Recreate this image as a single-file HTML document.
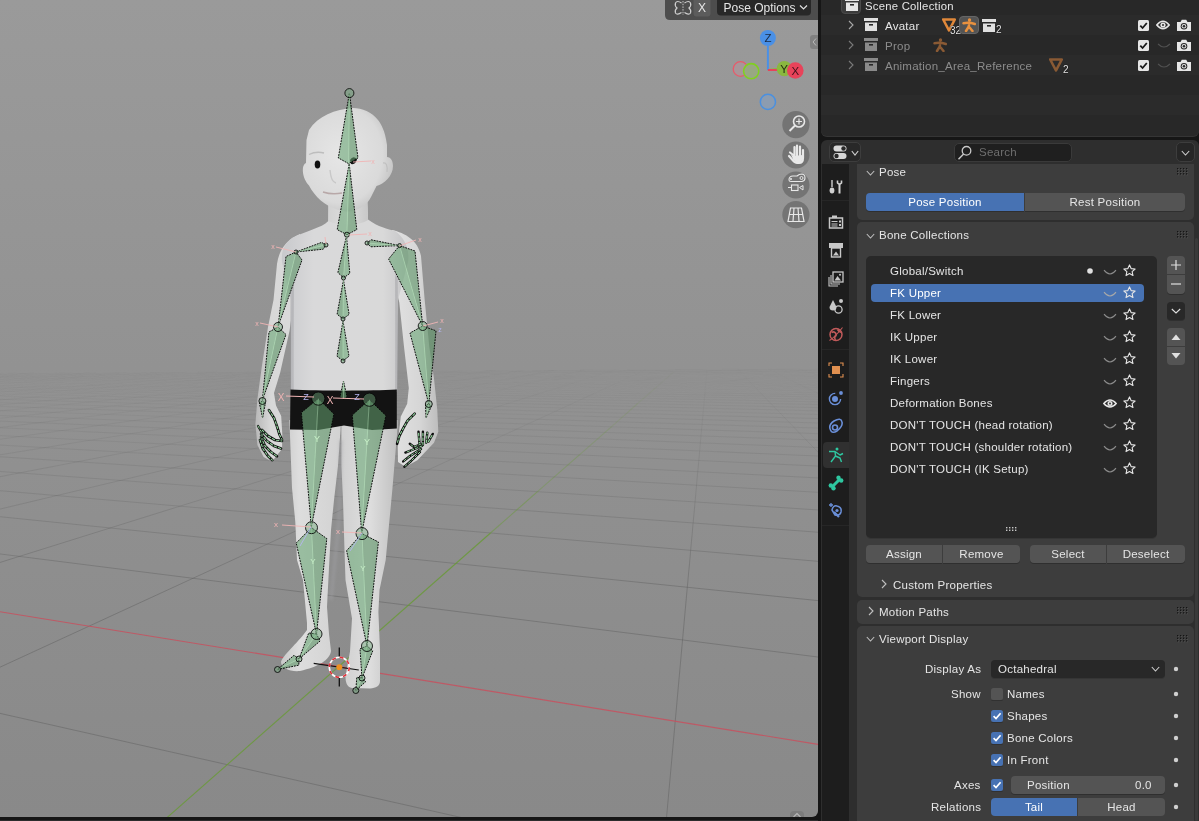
<!DOCTYPE html><html><head><meta charset="utf-8"><style>
*{margin:0;padding:0}
html,body{width:1199px;height:821px;overflow:hidden;background:#161616;font-family:"Liberation Sans",sans-serif}
.r{position:absolute}
.t{position:absolute;white-space:nowrap;line-height:1;font-family:"Liberation Sans",sans-serif;-webkit-font-smoothing:antialiased;will-change:transform}
#vp{position:absolute;left:0;top:0;width:818px;height:817px;will-change:transform;border-radius:0 0 6px 0;overflow:hidden}
</style></head><body>
<div id="vp"><svg width="818" height="817" viewBox="0 0 818 817" style="position:absolute;left:0;top:0">
<defs>
<linearGradient id="vpbg" x1="0" y1="0" x2="0" y2="1">
 <stop offset="0" stop-color="#9a9a9a"/><stop offset="0.45" stop-color="#929292"/><stop offset="1" stop-color="#898989"/>
</linearGradient>
<linearGradient id="armL" x1="0" y1="0" x2="1" y2="0"><stop offset="0" stop-color="#b8b8b8"/><stop offset="0.35" stop-color="#d8d8d8"/><stop offset="1" stop-color="#dadada"/></linearGradient>
<linearGradient id="armR" x1="0" y1="0" x2="1" y2="0"><stop offset="0" stop-color="#e2e2e2"/><stop offset="0.6" stop-color="#d6d6d6"/><stop offset="1" stop-color="#bdbdbd"/></linearGradient>
<linearGradient id="torso" x1="0" y1="0" x2="1" y2="0"><stop offset="0" stop-color="#c8c9cc"/><stop offset="0.25" stop-color="#d9d9da"/><stop offset="0.8" stop-color="#d9d9d9"/><stop offset="1" stop-color="#c4c4c6"/></linearGradient>
<linearGradient id="legL" x1="0" y1="0" x2="1" y2="0"><stop offset="0" stop-color="#c9c9c9"/><stop offset="0.3" stop-color="#dddddd"/><stop offset="1" stop-color="#d2d2d2"/></linearGradient>
<linearGradient id="legR" x1="0" y1="0" x2="1" y2="0"><stop offset="0" stop-color="#d0d0d0"/><stop offset="0.5" stop-color="#dedede"/><stop offset="1" stop-color="#c0c0c0"/></linearGradient>
<radialGradient id="head" cx="0.42" cy="0.45" r="0.62"><stop offset="0" stop-color="#e6e6e6"/><stop offset="0.75" stop-color="#dadada"/><stop offset="1" stop-color="#c2c2c2"/></radialGradient>
<filter id="blur2" x="-50%" y="-10%" width="200%" height="120%"><feGaussianBlur stdDeviation="1.5"/></filter>
<linearGradient id="neck" x1="0" y1="0" x2="1" y2="0"><stop offset="0" stop-color="#d2d2d2"/><stop offset="0.5" stop-color="#dedede"/><stop offset="1" stop-color="#c8c8c8"/></linearGradient>
</defs>
<rect x="0" y="0" width="818" height="817" fill="url(#vpbg)"/>
<path d="M-5.5 373.6L3.4 373.2M-5.1 374.9L34.1 373.0M-5.4 376.4L64.8 372.8M-5.8 378.0L95.5 372.7M-5.4 379.8L126.2 372.5M-5.8 381.8L156.3 372.4M-5.3 383.9L186.9 372.2M4.8 385.7L217.6 372.0M48.8 385.5L248.3 371.8M92.7 385.2L278.9 371.7M136.7 385.0L309.6 371.5M179.8 384.8L339.8 371.3M223.8 384.5L370.5 371.2M267.7 384.3L401.2 371.0M311.6 384.0L431.8 370.8M355.5 383.8L462.4 370.6M399.4 383.5L493.0 370.5M442.9 383.3L523.4 370.3M486.7 383.1L554.1 370.2M530.6 382.8L584.7 370.0M574.5 382.6L615.3 369.8M618.3 382.3L645.9 369.6M705.9 381.9L707.0 369.3M749.7 381.6L737.6 369.1M793.5 381.4L768.2 369.0M823.0 376.6L798.8 368.8M-6.1 385.2L18.1 385.7M-6.0 383.5L86.1 385.3M-6.0 382.0L154.1 384.9M-5.9 380.6L223.8 384.5M-5.9 379.2L291.8 384.2M-5.8 378.0L359.8 383.8M-5.8 376.9L427.7 383.4M-5.8 375.8L495.7 383.0M-5.7 374.8L563.6 382.6M-5.7 373.9L633.6 382.3M8.0 373.2L701.5 381.9M55.5 372.9L769.4 381.5M103.0 372.6L823.5 381.0M150.5 372.4L824.7 379.9M197.9 372.1L823.7 378.8M246.6 371.8L824.8 377.8M294.1 371.6L823.8 376.8M341.5 371.3L824.8 375.9M389.0 371.1L823.9 375.0M436.4 370.8L824.9 374.2M483.8 370.5L824.0 373.4M532.6 370.3L823.1 372.6M580.1 370.0L824.1 371.9M627.5 369.7L823.3 371.2M674.9 369.5L824.2 370.6M722.3 369.2L823.4 369.9M769.7 368.9L824.3 369.3M818.7 368.7L823.5 368.7" stroke="#5a5a5a" stroke-opacity="0.02" stroke-width="1" fill="none"/>
<path d="M-5.8 386.4L4.8 385.7M-5.2 389.2L48.8 385.5M-5.8 392.4L92.7 385.2M-5.1 396.0L136.7 385.0M39.8 396.6L179.8 384.8M95.5 396.2L223.8 384.5M150.0 396.0L267.7 384.3M205.6 395.7L311.6 384.0M261.3 395.4L355.5 383.8M316.8 395.0L399.4 383.5M372.4 394.7L442.9 383.3M427.9 394.4L486.7 383.1M482.9 394.2L530.6 382.8M538.5 393.9L574.5 382.6M594.0 393.5L618.3 382.3M704.9 392.9L705.9 381.9M760.3 392.6L749.7 381.6M815.9 392.3L793.5 381.4M-6.4 396.1L14.6 396.7M-6.3 393.5L100.7 396.2M-6.3 391.1L186.7 395.7M-6.2 389.0L272.7 395.3M-6.1 387.0L361.0 394.8M18.1 385.7L447.0 394.3M86.1 385.3L533.0 393.9M154.1 384.9L619.0 393.4M223.8 384.5L704.9 392.9M291.8 384.2L793.6 392.5M359.8 383.8L824.3 391.1M427.7 383.4L825.7 389.4M495.7 383.0L824.4 387.7M563.6 382.6L823.2 386.2M633.6 382.3L824.5 384.8M701.5 381.9L823.4 383.4M769.4 381.5L824.6 382.2" stroke="#5a5a5a" stroke-opacity="0.04" stroke-width="1" fill="none"/>
<path d="M-5.7 400.4L39.8 396.6M-6.5 405.5L95.5 396.2M42.3 406.7L150.0 396.0M108.7 406.4L205.6 395.7M175.1 406.0L261.3 395.4M241.4 405.6L316.8 395.0M306.7 405.3L372.4 394.7M373.0 404.9L427.9 394.4M439.3 404.6L482.9 394.2M505.6 404.2L538.5 393.9M571.8 403.8L594.0 393.5M704.0 403.1L704.9 392.9M770.2 402.8L760.3 392.6M823.1 395.9L815.9 392.3M-6.7 406.1L16.1 406.9M-6.6 402.4L118.7 406.3M-6.5 399.1L221.4 405.7M14.6 396.7L326.7 405.2M100.7 396.2L429.4 404.6M186.7 395.7L532.0 404.0M272.7 395.3L634.5 403.5M361.0 394.8L737.0 402.9M447.0 394.3L825.6 402.0M533.0 393.9L824.0 399.4M619.0 393.4L825.7 397.1M704.9 392.9L824.1 395.0M793.6 392.5L825.7 393.0" stroke="#5a5a5a" stroke-opacity="0.06" stroke-width="1" fill="none"/>
<path d="M-5.7 411.5L42.3 406.7M-6.6 419.0L108.7 406.4M69.1 419.0L175.1 406.0M148.6 418.5L241.4 405.6M228.0 418.0L306.7 405.3M306.2 417.8L373.0 404.9M385.7 417.3L439.3 404.6M465.1 416.8L505.6 404.2M544.4 416.4L571.8 403.8M702.9 415.4L704.0 403.1M782.2 415.2L770.2 402.8M-7.0 415.2L88.6 418.9M-6.9 410.3L211.6 418.2M16.1 406.9L334.5 417.5M118.7 406.3L457.4 416.8M221.4 405.7L583.9 416.2M326.7 405.2L706.8 415.5M429.4 404.6L825.5 414.7M532.0 404.0L823.6 411.0M634.5 403.5L825.6 407.8M737.0 402.9L823.8 404.7" stroke="#5a5a5a" stroke-opacity="0.08" stroke-width="1" fill="none"/>
<path d="M-5.6 428.2L69.1 419.0M53.8 431.7L148.6 418.5M146.6 431.2L228.0 418.0M239.4 430.6L306.2 417.8M332.1 430.1L385.7 417.3M424.6 429.5L465.1 416.8M516.5 429.2L544.4 416.4M701.7 428.1L702.9 415.4M794.2 427.6L782.2 415.2M-7.4 427.4L81.9 431.5M-7.2 420.8L225.4 430.7M88.6 418.9L368.9 429.9M211.6 418.2L512.3 429.1M334.5 417.5L655.5 428.3M457.4 416.8L803.5 427.6M583.9 416.2L825.4 423.2M706.8 415.5L823.3 418.7" stroke="#5a5a5a" stroke-opacity="0.1" stroke-width="1" fill="none"/>
<path d="M-6.7 440.2L53.8 431.7M70.7 443.4L146.6 431.2M174.1 443.2L239.4 430.6M279.7 442.5L332.1 430.1M385.1 441.9L424.6 429.5M490.4 441.2L516.5 429.2M700.6 440.0L701.7 428.1M805.9 439.7L794.2 427.6M-7.6 435.2L148.2 443.2M81.9 431.5L311.5 442.3M225.4 430.7L474.6 441.4M368.9 429.9L637.6 440.4M512.3 429.1L800.4 439.5M655.5 428.3L825.3 433.9M803.5 427.6L827.8 428.3" stroke="#5a5a5a" stroke-opacity="0.12" stroke-width="1" fill="none"/>
<path d="M-5.4 455.7L70.7 443.4M112.5 455.0L174.1 443.2M230.2 454.3L279.7 442.5M347.8 453.6L385.1 441.9M465.2 452.9L490.4 441.2M699.6 451.9L700.6 440.0M817.0 451.1L805.9 439.7M-7.9 444.6L165.8 454.6M148.2 443.2L347.8 453.6M311.5 442.3L535.0 452.8M474.6 441.4L717.2 451.7M637.6 440.4L825.2 447.8M800.4 439.5L828.0 440.5" stroke="#5a5a5a" stroke-opacity="0.14" stroke-width="1" fill="none"/>
<path d="M-7.0 478.0L52.5 466.6M134.4 477.1L182.1 465.7M275.5 476.2L311.5 464.9M416.4 475.3L439.5 464.7M697.5 474.2L698.6 463.1M-8.7 470.8L78.4 477.3M143.0 466.0L296.8 476.0M343.4 464.9L521.3 475.1M543.7 463.7L739.8 473.9M750.3 462.9L825.0 466.4" stroke="#5a5a5a" stroke-opacity="0.18" stroke-width="1" fill="none"/>
<path d="M52.5 466.6L112.5 455.0M182.1 465.7L230.2 454.3M311.5 464.9L347.8 453.6M439.5 464.7L465.2 452.9M698.6 463.1L699.6 451.9M823.3 457.7L817.0 451.1M-8.3 456.2L143.0 466.0M165.8 454.6L343.4 464.9M347.8 453.6L543.7 463.7M535.0 452.8L750.3 462.9M717.2 451.7L828.3 456.5" stroke="#5a5a5a" stroke-opacity="0.16" stroke-width="1" fill="none"/>
<path d="M-5.1 510.3L-0.9 509.3M140.1 518.6L173.5 508.2M325.0 517.4L347.6 507.0M693.9 515.0L694.7 505.8M-10.1 515.7L21.5 518.9M199.8 507.9L314.9 517.9M476.9 506.9L601.5 516.2M746.9 505.3L829.3 510.7" stroke="#5a5a5a" stroke-opacity="0.26" stroke-width="1" fill="none"/>
<path d="M-0.9 509.3L42.2 499.0M173.5 508.2L206.1 498.0M347.6 507.0L369.6 496.9M694.7 505.8L695.7 494.8M91.8 498.6L199.8 507.9M345.0 497.1L476.9 506.9M597.9 495.6L746.9 505.3" stroke="#5a5a5a" stroke-opacity="0.24" stroke-width="1" fill="none"/>
<path d="M42.2 499.0L86.9 488.4M206.1 498.0L239.8 487.4M369.6 496.9L392.3 486.4M695.7 494.8L696.6 484.5M-9.3 489.9L91.8 498.6M210.8 487.1L345.0 497.1M453.0 486.2L597.9 495.6M689.0 484.8L824.8 492.7" stroke="#5a5a5a" stroke-opacity="0.22" stroke-width="1" fill="none"/>
<path d="M86.9 488.4L134.4 477.1M239.8 487.4L275.5 476.2M392.3 486.4L416.4 475.3M696.6 484.5L697.5 474.2M78.4 477.3L210.8 487.1M296.8 476.0L453.0 486.2M521.3 475.1L689.0 484.8M739.8 473.9L828.8 478.5" stroke="#5a5a5a" stroke-opacity="0.2" stroke-width="1" fill="none"/>
<path d="M-7.7 564.9L14.2 558.0M217.7 566.9L240.2 556.5M689.5 563.7L690.4 553.5M27.3 557.4L101.8 566.8M385.6 556.3L466.4 564.6M735.4 554.2L830.3 562.4" stroke="#5a5a5a" stroke-opacity="0.36" stroke-width="1" fill="none"/>
<path d="M14.2 558.0L44.6 548.5M240.2 556.5L260.7 547.1M690.4 553.5L691.2 544.2M-11.3 552.5L27.3 557.4M293.2 546.8L385.6 556.3M626.7 544.8L735.4 554.2" stroke="#5a5a5a" stroke-opacity="0.34" stroke-width="1" fill="none"/>
<path d="M44.6 548.5L76.9 538.4M260.7 547.1L282.4 537.1M691.2 544.2L692.0 535.7M209.0 538.1L293.2 546.8M527.7 536.2L626.7 544.8" stroke="#5a5a5a" stroke-opacity="0.32" stroke-width="1" fill="none"/>
<path d="M76.9 538.4L110.1 528.0M282.4 537.1L302.2 528.0M692.0 535.7L692.9 525.4M117.3 528.7L209.0 538.1M420.0 526.9L527.7 536.2M722.2 525.1L824.4 532.7" stroke="#5a5a5a" stroke-opacity="0.3" stroke-width="1" fill="none"/>
<path d="M110.1 528.0L140.1 518.6M302.2 528.0L325.0 517.4M692.9 525.4L693.9 515.0M21.5 518.9L117.3 528.7M314.9 517.9L420.0 526.9M601.5 516.2L722.2 525.1" stroke="#5a5a5a" stroke-opacity="0.28" stroke-width="1" fill="none"/>
<path d="M-12.6 673.0L160.8 593.1M-16.2 709.7L488.3 823.6M665.7 826.7L686.9 591.7M305.3 592.4L832.1 658.8M726.6 591.3L823.8 601.2" stroke="#5a5a5a" stroke-opacity="0.44" stroke-width="1" fill="none"/>
<path d="M160.8 593.1L179.7 584.4M686.9 591.7L687.9 580.9M242.4 584.5L305.3 592.4M637.0 582.1L726.6 591.3" stroke="#5a5a5a" stroke-opacity="0.42" stroke-width="1" fill="none"/>
<path d="M179.7 584.4L197.3 576.3M687.9 580.9L688.6 572.9M174.0 575.9L242.4 584.5M554.0 573.6L637.0 582.1" stroke="#5a5a5a" stroke-opacity="0.4" stroke-width="1" fill="none"/>
<path d="M197.3 576.3L217.7 566.9M688.6 572.9L689.5 563.7M101.8 566.8L174.0 575.9M466.4 564.6L554.0 573.6" stroke="#5a5a5a" stroke-opacity="0.38" stroke-width="1" fill="none"/>
<path d="M-571.7 519.0L15851.0 3181.9" stroke="#c8505e" stroke-width="1.1" fill="none" opacity="0.85"/>
<path d="M-1226.3 2043.6L490.5 533.0" stroke="#6a9a38" stroke-width="1.1" fill="none" opacity="0.85"/>
<path d="M490.5 533.0L537.5 491.7" stroke="#6a9a38" stroke-width="1.1" fill="none" opacity="0.51"/>
<path d="M537.5 491.7L579.4 454.9" stroke="#6a9a38" stroke-width="1.1" fill="none" opacity="0.37"/>
<path d="M579.4 454.9L611.3 426.8" stroke="#6a9a38" stroke-width="1.1" fill="none" opacity="0.26"/>
<path d="M611.3 426.8L637.7 403.5" stroke="#6a9a38" stroke-width="1.1" fill="none" opacity="0.17"/>
<path d="M637.7 403.5L656.7 386.8" stroke="#6a9a38" stroke-width="1.1" fill="none" opacity="0.09"/>
<path d="M656.7 386.8L673.4 372.1" stroke="#6a9a38" stroke-width="1.1" fill="none" opacity="0.04"/>
<path d="M673.4 372.1L684.7 362.2" stroke="#6a9a38" stroke-width="1.1" fill="none" opacity="0.00"/>
<path d="M684.7 362.2L692.6 355.2" stroke="#6a9a38" stroke-width="1.1" fill="none" opacity="0.00"/>
<path d="M300 234 C286 240 279 250 277 264 L273.5 300 L268 327 L261.6 368 L257.4 399 L255.4 424 L257.4 445 L263.6 457 L272 461.5 L282 449 L282.3 434.6 L281.2 416 L276 405.6 L274 393 L280.2 372.5 L289.5 331 L294 300 L300 260 Z" fill="url(#armL)"/>
<path d="M392 230 C405 233 418 240 421 256 L424.6 299 L429.3 346.7 L434 378.4 L437.3 410 L438.3 431.7 L434 442.7 L417.4 460.3 L405.4 466.8 L398 462 L397.7 443.8 L400.8 416.4 L407.2 403.7 L408.8 388 L404 346.7 L399.3 302.4 L392 270 Z" fill="url(#armR)"/>
<path d="M328.3 200 L328.3 221 C322 228 305 231 292 238 C284 244 281 252 282 262 L291 300 L291 392 L397 392 L398 300 L408 262 C410 250 405 238 395 231 C388 229 378 227 368 219.5 L367.4 200 Z" fill="url(#torso)"/>
<path d="M289.4 420 L341 420 L340.5 430 L338 466 L334 500 L331 530 L329.4 560 L327 607 L329 634 L331 651 C330 660 318 667 300 671 C290 672 281 668 281 662 C283 655 296 645 307 630 L307 623 L303 580 L297 560 L295.3 522 L292 488 Z" fill="url(#legL)"/>
<path d="M341.4 420 L397.6 420 L397.6 427 L392.5 488 L385.7 560 L379.5 590 L378.4 612 L380 650 L380 681 C380 686 376 688 370 688.4 L352 688 C347 687 345.5 683 345.5 676 L350 651.5 L352 618.6 L345.5 580 L344.8 560 L343 500 L341.4 466 Z" fill="url(#legR)"/>
<path d="M293 285 C292 320 291 360 292 392" stroke="#9c9ca0" stroke-width="4" fill="none" opacity="0.55" filter="url(#blur2)"/>
<path d="M396 275 C397 320 397 360 396 392" stroke="#9c9ca0" stroke-width="4" fill="none" opacity="0.55" filter="url(#blur2)"/>
<path d="M341 440 L339 520 L331 600" stroke="#a0a0a4" stroke-width="3" fill="none" opacity="0.5" filter="url(#blur2)"/>
<path d="M290.5 389.5 C320 391 370 391 396.8 389.5 L396.8 428.5 L372 430 L344 425.5 L318 430 L290 429.5 Z" fill="#131313"/>
<path d="M329 196 L367 196 L368 220 C360 226 338 226 328.3 221 Z" fill="url(#neck)"/>
<path d="M353 108 C335 109 318 116 309 130 L306.5 140 L306 163 C301 165 302 178 309 185.6 C315 197 325 206 337 209.5 C344 212 350 212 355 210.5 C363 207 368 203 371 197 L376.5 186 C384 184 393 176 393 166 C393 160 390 157 387 157 L387 145 C385 130 381 124 378 120 C372 112 362 108 353 108 Z" fill="url(#head)"/>
<ellipse cx="317.5" cy="164.5" rx="2.8" ry="3.9" fill="#111"/>
<path d="M309 154.5 Q316 151 324 153" stroke="#bdbdbd" stroke-width="1.3" fill="none"/>
<path d="M323 192 Q332 195 342 193" stroke="#b8a8a8" stroke-width="1.5" fill="none"/>
<path d="M330 170 Q331 182 336 183" stroke="#c8c8c8" stroke-width="1.4" fill="none"/>
<path d="M350 160 Q353 155 357 159 Q356 165 351 164 Z" fill="#111"/>
<path d="M383 163 Q388 162 387 172" stroke="#c0c0c0" stroke-width="1.2" fill="none"/>
<polygon points="348.7,163.7 338.3,157.9 349.4,93.1" fill="#6fa97a" fill-opacity="0.62"/>
<polygon points="348.7,163.7 358.0,157.9 349.4,93.1" fill="#5e9468" fill-opacity="0.62"/>
<polygon points="348.7,163.7 338.3,157.9 349.4,93.1 358.0,157.9" fill="none" stroke="#050505" stroke-width="0.95" stroke-dasharray="1.8 1" stroke-linejoin="round"/>
<line x1="348.7" y1="163.7" x2="349.4" y2="93.1" stroke="#b8e8bc" stroke-width="0.8" opacity="0.6"/>
<circle cx="349.4" cy="93.1" r="4.5" fill="#6fa97a" fill-opacity="0.45" stroke="#050505" stroke-width="0.85"/>
<polygon points="346.9,234.7 337.2,229.6 349.2,163.7" fill="#6fa97a" fill-opacity="0.62"/>
<polygon points="346.9,234.7 356.8,229.6 349.2,163.7" fill="#5e9468" fill-opacity="0.62"/>
<polygon points="346.9,234.7 337.2,229.6 349.2,163.7 356.8,229.6" fill="none" stroke="#050505" stroke-width="0.95" stroke-dasharray="1.8 1" stroke-linejoin="round"/>
<line x1="346.9" y1="234.7" x2="349.2" y2="163.7" stroke="#b8e8bc" stroke-width="0.8" opacity="0.6"/>
<circle cx="346.9" cy="234.7" r="2.5" fill="#6fa97a" fill-opacity="0.45" stroke="#050505" stroke-width="0.85"/>
<polygon points="343.5,278.0 349.8,273.4 346.5,236.0" fill="#6fa97a" fill-opacity="0.62"/>
<polygon points="343.5,278.0 337.9,272.5 346.5,236.0" fill="#5e9468" fill-opacity="0.62"/>
<polygon points="343.5,278.0 349.8,273.4 346.5,236.0 337.9,272.5" fill="none" stroke="#050505" stroke-width="0.95" stroke-dasharray="1.8 1" stroke-linejoin="round"/>
<line x1="343.5" y1="278.0" x2="346.5" y2="236.0" stroke="#b8e8bc" stroke-width="0.8" opacity="0.6"/>
<circle cx="343.5" cy="278.0" r="2" fill="#6fa97a" fill-opacity="0.45" stroke="#050505" stroke-width="0.85"/>
<polygon points="343.0,319.0 349.1,314.4 343.5,280.0" fill="#6fa97a" fill-opacity="0.62"/>
<polygon points="343.0,319.0 337.1,314.2 343.5,280.0" fill="#5e9468" fill-opacity="0.62"/>
<polygon points="343.0,319.0 349.1,314.4 343.5,280.0 337.1,314.2" fill="none" stroke="#050505" stroke-width="0.95" stroke-dasharray="1.8 1" stroke-linejoin="round"/>
<line x1="343.0" y1="319.0" x2="343.5" y2="280.0" stroke="#b8e8bc" stroke-width="0.8" opacity="0.6"/>
<circle cx="343.0" cy="319.0" r="2" fill="#6fa97a" fill-opacity="0.45" stroke="#050505" stroke-width="0.85"/>
<polygon points="343.0,361.0 349.0,356.2 343.0,321.0" fill="#6fa97a" fill-opacity="0.62"/>
<polygon points="343.0,361.0 337.0,356.2 343.0,321.0" fill="#5e9468" fill-opacity="0.62"/>
<polygon points="343.0,361.0 349.0,356.2 343.0,321.0 337.0,356.2" fill="none" stroke="#050505" stroke-width="0.95" stroke-dasharray="1.8 1" stroke-linejoin="round"/>
<line x1="343.0" y1="361.0" x2="343.0" y2="321.0" stroke="#b8e8bc" stroke-width="0.8" opacity="0.6"/>
<circle cx="343.0" cy="361.0" r="2" fill="#6fa97a" fill-opacity="0.45" stroke="#050505" stroke-width="0.85"/>
<polygon points="343.5,399.0 347.0,396.8 343.5,381.0" fill="#6fa97a" fill-opacity="0.62"/>
<polygon points="343.5,399.0 340.0,396.8 343.5,381.0" fill="#5e9468" fill-opacity="0.62"/>
<polygon points="343.5,399.0 347.0,396.8 343.5,381.0 340.0,396.8" fill="none" stroke="#050505" stroke-width="0.95" stroke-dasharray="1.8 1" stroke-linejoin="round"/>
<line x1="343.5" y1="399.0" x2="343.5" y2="381.0" stroke="#b8e8bc" stroke-width="0.8" opacity="0.6"/>
<polygon points="326.0,245.0 321.6,242.4 296.0,252.0" fill="#6fa97a" fill-opacity="0.62"/>
<polygon points="326.0,245.0 323.2,249.2 296.0,252.0" fill="#5e9468" fill-opacity="0.62"/>
<polygon points="326.0,245.0 321.6,242.4 296.0,252.0 323.2,249.2" fill="none" stroke="#050505" stroke-width="0.95" stroke-dasharray="1.8 1" stroke-linejoin="round"/>
<line x1="326.0" y1="245.0" x2="296.0" y2="252.0" stroke="#b8e8bc" stroke-width="0.8" opacity="0.6"/>
<circle cx="326.0" cy="245.0" r="2" fill="#6fa97a" fill-opacity="0.45" stroke="#050505" stroke-width="0.85"/>
<polygon points="367.0,243.0 370.6,246.8 399.6,245.6" fill="#6fa97a" fill-opacity="0.62"/>
<polygon points="367.0,243.0 371.2,239.8 399.6,245.6" fill="#5e9468" fill-opacity="0.62"/>
<polygon points="367.0,243.0 370.6,246.8 399.6,245.6 371.2,239.8" fill="none" stroke="#050505" stroke-width="0.95" stroke-dasharray="1.8 1" stroke-linejoin="round"/>
<line x1="367.0" y1="243.0" x2="399.6" y2="245.6" stroke="#b8e8bc" stroke-width="0.8" opacity="0.6"/>
<circle cx="367.0" cy="243.0" r="2" fill="#6fa97a" fill-opacity="0.45" stroke="#050505" stroke-width="0.85"/>
<polygon points="296.0,252.0 286.0,256.5 278.2,326.0" fill="#6fa97a" fill-opacity="0.62"/>
<polygon points="296.0,252.0 302.0,260.0 278.2,326.0" fill="#5e9468" fill-opacity="0.62"/>
<polygon points="296.0,252.0 286.0,256.5 278.2,326.0 302.0,260.0" fill="none" stroke="#050505" stroke-width="0.95" stroke-dasharray="1.8 1" stroke-linejoin="round"/>
<line x1="296.0" y1="252.0" x2="278.2" y2="326.0" stroke="#b8e8bc" stroke-width="0.8" opacity="0.6"/>
<circle cx="296.0" cy="252.0" r="2" fill="#6fa97a" fill-opacity="0.45" stroke="#050505" stroke-width="0.85"/>
<polygon points="278.0,327.0 269.0,332.0 262.4,400.0" fill="#6fa97a" fill-opacity="0.62"/>
<polygon points="278.0,327.0 286.0,334.5 262.4,400.0" fill="#5e9468" fill-opacity="0.62"/>
<polygon points="278.0,327.0 269.0,332.0 262.4,400.0 286.0,334.5" fill="none" stroke="#050505" stroke-width="0.95" stroke-dasharray="1.8 1" stroke-linejoin="round"/>
<line x1="278.0" y1="327.0" x2="262.4" y2="400.0" stroke="#b8e8bc" stroke-width="0.8" opacity="0.6"/>
<circle cx="278.0" cy="327.0" r="4.5" fill="#6fa97a" fill-opacity="0.45" stroke="#050505" stroke-width="0.85"/>
<polygon points="262.4,401.0 259.4,403.1 262.6,418.0" fill="#6fa97a" fill-opacity="0.62"/>
<polygon points="262.4,401.0 265.4,403.0 262.6,418.0" fill="#5e9468" fill-opacity="0.62"/>
<polygon points="262.4,401.0 259.4,403.1 262.6,418.0 265.4,403.0" fill="none" stroke="#050505" stroke-width="0.95" stroke-dasharray="1.8 1" stroke-linejoin="round"/>
<line x1="262.4" y1="401.0" x2="262.6" y2="418.0" stroke="#b8e8bc" stroke-width="0.8" opacity="0.6"/>
<circle cx="262.4" cy="401.0" r="3.5" fill="#6fa97a" fill-opacity="0.45" stroke="#050505" stroke-width="0.85"/>
<polygon points="399.6,245.6 388.6,259.0 422.7,326.0" fill="#6fa97a" fill-opacity="0.62"/>
<polygon points="399.6,245.6 415.0,251.0 422.7,326.0" fill="#5e9468" fill-opacity="0.62"/>
<polygon points="399.6,245.6 388.6,259.0 422.7,326.0 415.0,251.0" fill="none" stroke="#050505" stroke-width="0.95" stroke-dasharray="1.8 1" stroke-linejoin="round"/>
<line x1="399.6" y1="245.6" x2="422.7" y2="326.0" stroke="#b8e8bc" stroke-width="0.8" opacity="0.6"/>
<circle cx="399.6" cy="245.6" r="2" fill="#6fa97a" fill-opacity="0.45" stroke="#050505" stroke-width="0.85"/>
<polygon points="422.7,326.0 410.0,333.0 428.8,404.0" fill="#6fa97a" fill-opacity="0.62"/>
<polygon points="422.7,326.0 436.0,330.8 428.8,404.0" fill="#5e9468" fill-opacity="0.62"/>
<polygon points="422.7,326.0 410.0,333.0 428.8,404.0 436.0,330.8" fill="none" stroke="#050505" stroke-width="0.95" stroke-dasharray="1.8 1" stroke-linejoin="round"/>
<line x1="422.7" y1="326.0" x2="428.8" y2="404.0" stroke="#b8e8bc" stroke-width="0.8" opacity="0.6"/>
<circle cx="422.7" cy="326.0" r="4.5" fill="#6fa97a" fill-opacity="0.45" stroke="#050505" stroke-width="0.85"/>
<polygon points="428.8,404.0 425.5,405.1 426.0,418.0" fill="#6fa97a" fill-opacity="0.62"/>
<polygon points="428.8,404.0 431.4,406.3 426.0,418.0" fill="#5e9468" fill-opacity="0.62"/>
<polygon points="428.8,404.0 425.5,405.1 426.0,418.0 431.4,406.3" fill="none" stroke="#050505" stroke-width="0.95" stroke-dasharray="1.8 1" stroke-linejoin="round"/>
<line x1="428.8" y1="404.0" x2="426.0" y2="418.0" stroke="#b8e8bc" stroke-width="0.8" opacity="0.6"/>
<circle cx="428.8" cy="404.0" r="3.5" fill="#6fa97a" fill-opacity="0.45" stroke="#050505" stroke-width="0.85"/>
<polygon points="318.3,398.6 301.4,412.5 311.3,527.0" fill="#6fa97a" fill-opacity="0.62"/>
<polygon points="318.3,398.6 333.9,414.0 311.3,527.0" fill="#5e9468" fill-opacity="0.62"/>
<polygon points="318.3,398.6 301.4,412.5 311.3,527.0 333.9,414.0" fill="none" stroke="#050505" stroke-width="0.95" stroke-dasharray="1.8 1" stroke-linejoin="round"/>
<line x1="318.3" y1="398.6" x2="311.3" y2="527.0" stroke="#b8e8bc" stroke-width="0.8" opacity="0.6"/>
<circle cx="318.3" cy="398.6" r="6.6" fill="#6fa97a" fill-opacity="0.45" stroke="#050505" stroke-width="0.85"/>
<polygon points="369.4,399.7 352.3,415.0 361.7,532.9" fill="#6fa97a" fill-opacity="0.62"/>
<polygon points="369.4,399.7 385.9,415.5 361.7,532.9" fill="#5e9468" fill-opacity="0.62"/>
<polygon points="369.4,399.7 352.3,415.0 361.7,532.9 385.9,415.5" fill="none" stroke="#050505" stroke-width="0.95" stroke-dasharray="1.8 1" stroke-linejoin="round"/>
<line x1="369.4" y1="399.7" x2="361.7" y2="532.9" stroke="#b8e8bc" stroke-width="0.8" opacity="0.6"/>
<circle cx="369.4" cy="399.7" r="6.6" fill="#6fa97a" fill-opacity="0.45" stroke="#050505" stroke-width="0.85"/>
<polygon points="311.5,527.7 296.2,543.0 316.5,634.0" fill="#6fa97a" fill-opacity="0.62"/>
<polygon points="311.5,527.7 326.8,538.6 316.5,634.0" fill="#5e9468" fill-opacity="0.62"/>
<polygon points="311.5,527.7 296.2,543.0 316.5,634.0 326.8,538.6" fill="none" stroke="#050505" stroke-width="0.95" stroke-dasharray="1.8 1" stroke-linejoin="round"/>
<line x1="311.5" y1="527.7" x2="316.5" y2="634.0" stroke="#b8e8bc" stroke-width="0.8" opacity="0.6"/>
<circle cx="311.5" cy="527.7" r="6" fill="#6fa97a" fill-opacity="0.45" stroke="#050505" stroke-width="0.85"/>
<polygon points="362.0,533.6 346.6,550.7 367.0,646.0" fill="#6fa97a" fill-opacity="0.62"/>
<polygon points="362.0,533.6 378.4,542.0 367.0,646.0" fill="#5e9468" fill-opacity="0.62"/>
<polygon points="362.0,533.6 346.6,550.7 367.0,646.0 378.4,542.0" fill="none" stroke="#050505" stroke-width="0.95" stroke-dasharray="1.8 1" stroke-linejoin="round"/>
<line x1="362.0" y1="533.6" x2="367.0" y2="646.0" stroke="#b8e8bc" stroke-width="0.8" opacity="0.6"/>
<circle cx="362.0" cy="533.6" r="6" fill="#6fa97a" fill-opacity="0.45" stroke="#050505" stroke-width="0.85"/>
<polygon points="316.5,634.0 308.7,633.0 299.0,659.0" fill="#6fa97a" fill-opacity="0.62"/>
<polygon points="316.5,634.0 320.1,641.0 299.0,659.0" fill="#5e9468" fill-opacity="0.62"/>
<polygon points="316.5,634.0 308.7,633.0 299.0,659.0 320.1,641.0" fill="none" stroke="#050505" stroke-width="0.95" stroke-dasharray="1.8 1" stroke-linejoin="round"/>
<line x1="316.5" y1="634.0" x2="299.0" y2="659.0" stroke="#b8e8bc" stroke-width="0.8" opacity="0.6"/>
<circle cx="316.5" cy="634.0" r="5.5" fill="#6fa97a" fill-opacity="0.45" stroke="#050505" stroke-width="0.85"/>
<polygon points="299.0,659.0 294.0,655.3 277.5,669.5" fill="#6fa97a" fill-opacity="0.62"/>
<polygon points="299.0,659.0 298.8,665.2 277.5,669.5" fill="#5e9468" fill-opacity="0.62"/>
<polygon points="299.0,659.0 294.0,655.3 277.5,669.5 298.8,665.2" fill="none" stroke="#050505" stroke-width="0.95" stroke-dasharray="1.8 1" stroke-linejoin="round"/>
<line x1="299.0" y1="659.0" x2="277.5" y2="669.5" stroke="#b8e8bc" stroke-width="0.8" opacity="0.6"/>
<circle cx="299.0" cy="659.0" r="3" fill="#6fa97a" fill-opacity="0.45" stroke="#050505" stroke-width="0.85"/>
<circle cx="277.5" cy="669.5" r="3" fill="#6fa97a" fill-opacity="0.45" stroke="#050505" stroke-width="0.85"/>
<polygon points="367.0,646.0 360.0,648.8 362.0,678.0" fill="#6fa97a" fill-opacity="0.62"/>
<polygon points="367.0,646.0 372.8,650.8 362.0,678.0" fill="#5e9468" fill-opacity="0.62"/>
<polygon points="367.0,646.0 360.0,648.8 362.0,678.0 372.8,650.8" fill="none" stroke="#050505" stroke-width="0.95" stroke-dasharray="1.8 1" stroke-linejoin="round"/>
<line x1="367.0" y1="646.0" x2="362.0" y2="678.0" stroke="#b8e8bc" stroke-width="0.8" opacity="0.6"/>
<circle cx="367.0" cy="646.0" r="5.5" fill="#6fa97a" fill-opacity="0.45" stroke="#050505" stroke-width="0.85"/>
<polygon points="362.0,678.0 356.8,677.3 355.8,690.5" fill="#6fa97a" fill-opacity="0.62"/>
<polygon points="362.0,678.0 365.7,681.7 355.8,690.5" fill="#5e9468" fill-opacity="0.62"/>
<polygon points="362.0,678.0 356.8,677.3 355.8,690.5 365.7,681.7" fill="none" stroke="#050505" stroke-width="0.95" stroke-dasharray="1.8 1" stroke-linejoin="round"/>
<line x1="362.0" y1="678.0" x2="355.8" y2="690.5" stroke="#b8e8bc" stroke-width="0.8" opacity="0.6"/>
<circle cx="362.0" cy="678.0" r="3" fill="#6fa97a" fill-opacity="0.45" stroke="#050505" stroke-width="0.85"/>
<circle cx="355.8" cy="690.5" r="3" fill="#6fa97a" fill-opacity="0.45" stroke="#050505" stroke-width="0.85"/>
<path d="M268.9 410.0 L274.2 418.3 L277.2 427.0 L279.6 434.8 L282.0 439.7" stroke="#0d0d0d" stroke-width="2.6" fill="none" stroke-linecap="round" stroke-linejoin="round"/><path d="M268.9 410.0 L274.2 418.3 L277.2 427.0 L279.6 434.8 L282.0 439.7" stroke="#8fd39a" stroke-width="1.1" fill="none" stroke-linecap="round" stroke-dasharray="2.5 2"/>
<path d="M262.0 430.0 L268.0 436.0 L275.0 440.0 L282.0 441.0" stroke="#0d0d0d" stroke-width="2.6" fill="none" stroke-linecap="round" stroke-linejoin="round"/><path d="M262.0 430.0 L268.0 436.0 L275.0 440.0 L282.0 441.0" stroke="#8fd39a" stroke-width="1.1" fill="none" stroke-linecap="round" stroke-dasharray="2.5 2"/>
<path d="M261.0 434.0 L267.0 441.0 L274.0 446.0 L281.0 448.5" stroke="#0d0d0d" stroke-width="2.6" fill="none" stroke-linecap="round" stroke-linejoin="round"/><path d="M261.0 434.0 L267.0 441.0 L274.0 446.0 L281.0 448.5" stroke="#8fd39a" stroke-width="1.1" fill="none" stroke-linecap="round" stroke-dasharray="2.5 2"/>
<path d="M261.0 437.0 L265.0 446.0 L271.0 452.0 L277.0 456.3" stroke="#0d0d0d" stroke-width="2.6" fill="none" stroke-linecap="round" stroke-linejoin="round"/><path d="M261.0 437.0 L265.0 446.0 L271.0 452.0 L277.0 456.3" stroke="#8fd39a" stroke-width="1.1" fill="none" stroke-linecap="round" stroke-dasharray="2.5 2"/>
<path d="M260.0 440.0 L263.0 449.0 L268.0 456.0 L272.3 460.2" stroke="#0d0d0d" stroke-width="2.6" fill="none" stroke-linecap="round" stroke-linejoin="round"/><path d="M260.0 440.0 L263.0 449.0 L268.0 456.0 L272.3 460.2" stroke="#8fd39a" stroke-width="1.1" fill="none" stroke-linecap="round" stroke-dasharray="2.5 2"/>
<path d="M258.0 426.0 L262.0 433.0 L262.0 440.0" stroke="#0d0d0d" stroke-width="2.2" fill="none" stroke-linecap="round" stroke-linejoin="round"/><path d="M258.0 426.0 L262.0 433.0 L262.0 440.0" stroke="#8fd39a" stroke-width="1" fill="none" stroke-linecap="round" stroke-dasharray="2.5 2"/>
<path d="M414.7 413.6 L407.6 420.7 L403.2 428.4 L399.3 436.1 L397.1 443.8" stroke="#0d0d0d" stroke-width="2.6" fill="none" stroke-linecap="round" stroke-linejoin="round"/><path d="M414.7 413.6 L407.6 420.7 L403.2 428.4 L399.3 436.1 L397.1 443.8" stroke="#8fd39a" stroke-width="1.1" fill="none" stroke-linecap="round" stroke-dasharray="2.5 2"/>
<path d="M419.6 444.9 L418.5 431.7" stroke="#0d0d0d" stroke-width="2.4" fill="none" stroke-linecap="round" stroke-linejoin="round"/><path d="M419.6 444.9 L418.5 431.7" stroke="#8fd39a" stroke-width="1.2" fill="none" stroke-linecap="round" stroke-dasharray="2.5 2"/>
<path d="M422.9 444.9 L422.9 431.7" stroke="#0d0d0d" stroke-width="2.4" fill="none" stroke-linecap="round" stroke-linejoin="round"/><path d="M422.9 444.9 L422.9 431.7" stroke="#8fd39a" stroke-width="1.2" fill="none" stroke-linecap="round" stroke-dasharray="2.5 2"/>
<path d="M426.2 442.7 L427.3 432.8" stroke="#0d0d0d" stroke-width="2.4" fill="none" stroke-linecap="round" stroke-linejoin="round"/><path d="M426.2 442.7 L427.3 432.8" stroke="#8fd39a" stroke-width="1.2" fill="none" stroke-linecap="round" stroke-dasharray="2.5 2"/>
<path d="M428.4 441.6 L432.8 433.9" stroke="#0d0d0d" stroke-width="2.4" fill="none" stroke-linecap="round" stroke-linejoin="round"/><path d="M428.4 441.6 L432.8 433.9" stroke="#8fd39a" stroke-width="1.2" fill="none" stroke-linecap="round" stroke-dasharray="2.5 2"/>
<path d="M421.0 444.0 L414.0 447.0 L409.8 443.8" stroke="#0d0d0d" stroke-width="2.4" fill="none" stroke-linecap="round" stroke-linejoin="round"/><path d="M421.0 444.0 L414.0 447.0 L409.8 443.8" stroke="#8fd39a" stroke-width="1" fill="none" stroke-linecap="round" stroke-dasharray="2.5 2"/>
<path d="M422.0 446.0 L412.0 450.0 L405.4 452.6" stroke="#0d0d0d" stroke-width="2.4" fill="none" stroke-linecap="round" stroke-linejoin="round"/><path d="M422.0 446.0 L412.0 450.0 L405.4 452.6" stroke="#8fd39a" stroke-width="1" fill="none" stroke-linecap="round" stroke-dasharray="2.5 2"/>
<path d="M421.0 449.0 L410.0 456.0 L403.2 461.4" stroke="#0d0d0d" stroke-width="2.4" fill="none" stroke-linecap="round" stroke-linejoin="round"/><path d="M421.0 449.0 L410.0 456.0 L403.2 461.4" stroke="#8fd39a" stroke-width="1" fill="none" stroke-linecap="round" stroke-dasharray="2.5 2"/>
<path d="M420.0 452.0 L411.0 461.0 L404.3 466.8" stroke="#0d0d0d" stroke-width="2.4" fill="none" stroke-linecap="round" stroke-linejoin="round"/><path d="M420.0 452.0 L411.0 461.0 L404.3 466.8" stroke="#8fd39a" stroke-width="1" fill="none" stroke-linecap="round" stroke-dasharray="2.5 2"/>
<path d="M353 162 L371 161" stroke="#f0b4b4" stroke-width="0.9"/>
<text x="373" y="164" font-family="Liberation Sans" font-size="7" fill="#f0b4b4" text-anchor="middle">x</text>
<path d="M349 235 L367 234" stroke="#f0b4b4" stroke-width="0.9"/>
<text x="370" y="236" font-family="Liberation Sans" font-size="7" fill="#f0b4b4" text-anchor="middle">x</text>
<path d="M296 252 L276 247" stroke="#f0b4b4" stroke-width="0.9"/>
<text x="273" y="249" font-family="Liberation Sans" font-size="7" fill="#f0b4b4" text-anchor="middle">x</text>
<path d="M325 237 L326 244" stroke="#f0b4b4" stroke-width="0.9"/>
<path d="M399 246 L416 240" stroke="#f0b4b4" stroke-width="0.9"/>
<text x="420" y="242" font-family="Liberation Sans" font-size="7" fill="#f0b4b4" text-anchor="middle">x</text>
<path d="M278 327 L260 323" stroke="#f0b4b4" stroke-width="0.9"/>
<text x="257" y="326" font-family="Liberation Sans" font-size="7" fill="#f0b4b4" text-anchor="middle">x</text>
<path d="M423 326 L438 322" stroke="#f0b4b4" stroke-width="0.9"/>
<text x="442" y="323" font-family="Liberation Sans" font-size="7" fill="#f0b4b4" text-anchor="middle">x</text>
<text x="440" y="332" font-family="Liberation Sans" font-size="7" fill="#b4b4f0" text-anchor="middle">z</text>
<path d="M286 396 L314 397" stroke="#f0b4b4" stroke-width="1.1"/>
<text x="281" y="401" font-family="Liberation Sans" font-size="10" fill="#f0b4b4" text-anchor="middle">X</text>
<text x="306" y="400" font-family="Liberation Sans" font-size="9" fill="#b4b4f0" text-anchor="middle">Z</text>
<path d="M333 398 L364 399" stroke="#f0b4b4" stroke-width="1.1"/>
<text x="330" y="404" font-family="Liberation Sans" font-size="10" fill="#f0b4b4" text-anchor="middle">X</text>
<text x="357" y="400" font-family="Liberation Sans" font-size="9" fill="#b4b4f0" text-anchor="middle">Z</text>
<path d="M282 525 L311 527" stroke="#f0b4b4" stroke-width="0.9"/>
<text x="276" y="527" font-family="Liberation Sans" font-size="8" fill="#f0b4b4" text-anchor="middle">x</text>
<path d="M342 532 L362 533" stroke="#f0b4b4" stroke-width="0.9"/>
<text x="338" y="534" font-family="Liberation Sans" font-size="8" fill="#f0b4b4" text-anchor="middle">x</text>
<path d="M311 527 L300 546" stroke="#b4b4f0" stroke-width="0.9"/>
<path d="M362 533 L350 551" stroke="#b4b4f0" stroke-width="0.9"/>
<text x="317" y="442" font-family="Liberation Sans" font-size="9" fill="#c8f0c8" text-anchor="middle">Y</text>
<text x="367" y="445" font-family="Liberation Sans" font-size="9" fill="#c8f0c8" text-anchor="middle">Y</text>
<text x="313" y="564" font-family="Liberation Sans" font-size="8" fill="#c8f0c8" text-anchor="middle">Y</text>
<text x="363" y="571" font-family="Liberation Sans" font-size="8" fill="#c8f0c8" text-anchor="middle">Y</text>
<g><path d="M313.7 663.4 L358.8 670" stroke="#111" stroke-width="1.1"/><path d="M339.3 647.6 V657.5 M339.3 677 V686.6" stroke="#111" stroke-width="1.3"/><circle cx="339.3" cy="667.3" r="10" fill="none" stroke="#ffffff" stroke-width="1.6"/><circle cx="339.3" cy="667.3" r="10" fill="none" stroke="#e0303a" stroke-width="1.6" stroke-dasharray="3.93 3.93"/><circle cx="339.3" cy="667.3" r="3" fill="#f09020"/></g>
<circle cx="740.5" cy="69" r="7.3" fill="#a8969a" stroke="#e85a6a" stroke-width="1.3"/>
<circle cx="751.2" cy="71.2" r="7.6" fill="#98a882" stroke="#80d020" stroke-width="1.6"/>
<circle cx="767.9" cy="101.9" r="7.6" fill="#8c9cb0" stroke="#4a90e0" stroke-width="1.5"/>
<path d="M767.9 70 V46" stroke="#4a90e6" stroke-width="2"/>
<path d="M767.9 70 L777 69" stroke="#8ab83f" stroke-width="2"/>
<path d="M767.9 70 H788" stroke="#e8435a" stroke-width="2"/>
<circle cx="767.9" cy="38" r="8" fill="#4a90e6"/>
<text x="767.9" y="42.3" font-family="Liberation Sans" font-size="11.5" fill="#1a2a40" text-anchor="middle">Z</text>
<circle cx="784.3" cy="68.7" r="7.6" fill="#8ab83f"/>
<text x="784" y="73" font-family="Liberation Sans" font-size="11.5" fill="#243010" text-anchor="middle">Y</text>
<circle cx="795.3" cy="70.5" r="8.3" fill="#e8435a"/>
<text x="795.3" y="74.8" font-family="Liberation Sans" font-size="11.5" fill="#40101a" text-anchor="middle">X</text>
<circle cx="795.9" cy="124.7" r="13.6" fill="#707070" fill-opacity="0.9"/>
<circle cx="795.9" cy="155" r="13.6" fill="#707070" fill-opacity="0.9"/>
<circle cx="795.9" cy="185" r="13.6" fill="#707070" fill-opacity="0.9"/>
<circle cx="795.9" cy="214.7" r="13.6" fill="#707070" fill-opacity="0.9"/>
<circle cx="799" cy="121.5" r="5.5" fill="none" stroke="#e8e8e8" stroke-width="1.6"/><path d="M795 125.5 L789.5 131" stroke="#e8e8e8" stroke-width="2"/><path d="M799 118.5 V124.5 M796 121.5 H802" stroke="#e8e8e8" stroke-width="1.2"/>
<path d="M789 156 L793 160.5 Q795 163 799 163 Q803 163 803 158 V150 M800 159 V146.5 M797 159 V145.5 M794.5 159 V147 L794.5 156 L790 152.5" fill="none" stroke="#e8e8e8" stroke-width="2.2" stroke-linecap="round" stroke-linejoin="round"/>
<path d="M791 155 Q795 164 800 163 Q803 161 802.5 155 L794 156 Z" fill="#e8e8e8"/>
<path d="M789 180 Q789 176 793 176 L797 176 Q799 174 802 174 Q805 174.5 805 178 Q805 181 802 181.5 L791 181.5 Q789 181.5 789 180 Z" fill="none" stroke="#e8e8e8" stroke-width="1.1"/><circle cx="801.5" cy="178" r="1.5" fill="none" stroke="#e8e8e8" stroke-width="1"/>
<rect x="791.5" y="185" width="6.5" height="5.5" fill="none" stroke="#e8e8e8" stroke-width="1.1"/><path d="M799.5 187.5 L803 185.5 V190 Z" fill="none" stroke="#e8e8e8" stroke-width="1"/><path d="M788 187.5 H791 M790 179 H792 M791 178 V180" stroke="#e8e8e8" stroke-width="1"/>
<path d="M790.5 208 H801.5 L804 221.5 H788 Z M789.2 214.5 H802.8 M794 208 L793 221.5 M798 208 L799 221.5" fill="none" stroke="#e8e8e8" stroke-width="1.2"/>
<path d="M665 0 H818 V20 H670 Q665 20 665 15 Z" fill="#3a3a3a" fill-opacity="0.8"/>
<path d="M683 1 V15" stroke="#d0d0d0" stroke-width="0.9" stroke-dasharray="1.5 1.2"/>
<path d="M681.5 3 Q677 0 675.5 3 Q674.5 6 677 8 Q674.5 10 675.5 13 Q677 15.5 681.5 12.5 M684.5 3 Q689 0 690.5 3 Q691.5 6 689 8 Q691.5 10 690.5 13 Q689 15.5 684.5 12.5" fill="none" stroke="#cfcfcf" stroke-width="1.2"/>
<rect x="693.5" y="-4" width="17" height="20.5" rx="3" fill="#5c5c5c"/>
<text x="702" y="11.5" font-family="Liberation Sans" font-size="12" fill="#e5e5e5" text-anchor="middle">X</text>
<rect x="717" y="-4" width="94" height="19.5" rx="4" fill="#282828"/>
<text x="723.5" y="11.5" font-family="Liberation Sans" font-size="12" fill="#e5e5e5">Pose Options</text>
<path d="M800 5.5 L803.5 9 L807 5.5" fill="none" stroke="#e0e0e0" stroke-width="1.2"/>
<rect x="810" y="35" width="12" height="14" rx="3" fill="#808080"/>
<path d="M816 38.5 L813 42 L816 45.5" fill="none" stroke="#b8b8b8" stroke-width="1"/>
<rect x="790" y="811" width="14" height="10" rx="4" fill="#7c7c7c"/><path d="M793.5 817 L797 813.5 L800.5 817" stroke="#b8b8b8" fill="none" stroke-width="1.1"/>
</svg></div>
<div class="r" style="left:0;top:820px;width:818px;height:1px;background:#2c2c2c"></div>
<div class="r" style="left:821px;top:0px;width:378px;height:137px;background:#353535;border-radius:0px;border-radius:0 0 6px 6px;"></div>
<div class="r" style="left:821px;top:0px;width:378px;height:136px;background:#282828;border-radius:0px;border-radius:0 0 6px 6px;"></div>
<div class="r" style="left:821px;top:15px;width:378px;height:20px;background:#2b2b2b;border-radius:0px;"></div>
<div class="r" style="left:821px;top:55px;width:378px;height:20px;background:#2b2b2b;border-radius:0px;"></div>
<div class="r" style="left:821px;top:95px;width:378px;height:20px;background:#2b2b2b;border-radius:0px;"></div>
<div class="r" style="left:821px;top:135px;width:378px;height:-5px;background:#2b2b2b;border-radius:0px;"></div>
<div class="r" style="left:841px;top:-6px;width:20px;height:20px;background:#3b3b3b;border-radius:4px;border:1px solid #4a4a4a;box-sizing:border-box;"></div>
<svg class="r" style="left:845px;top:-2px;" width="14" height="13" viewBox="0 0 14 13"><rect x="0" y="0" width="14" height="3" fill="#e6e6e6"/><rect x="1" y="4.5" width="12" height="8.5" fill="#e6e6e6"/><rect x="5" y="6" width="4" height="1.6" fill="#282828"/></svg>
<div class="t" style="left:865px;top:1.0px;font-size:11.328px;color:#e6e6e6;letter-spacing:0.24px;">Scene Collection</div>
<svg class="r" style="left:848px;top:20px;" width="7" height="10" viewBox="0 0 7 10"><path d="M1 1 L5 5 L1 9" fill="none" stroke="#a8a8a8" stroke-width="1.1"/></svg>
<svg class="r" style="left:864px;top:18px;" width="14" height="13" viewBox="0 0 14 13"><rect x="0" y="0" width="14" height="3" fill="#e0e0e0"/><rect x="1" y="4.5" width="12" height="8.5" fill="#e0e0e0"/><rect x="5" y="6" width="4" height="1.6" fill="#282828"/></svg>
<div class="t" style="left:885px;top:20.6px;font-size:11.52px;color:#e6e6e6;letter-spacing:0.24px;">Avatar</div>
<svg class="r" style="left:1138px;top:20px;" width="11" height="11" viewBox="0 0 11 11"><rect x="0" y="0" width="11" height="11" rx="1.5" fill="#e6e6e6"/><path d="M2.3 5.6 L4.6 8 L8.8 3" fill="none" stroke="#1a1a1a" stroke-width="1.8"/></svg>
<svg class="r" style="left:1177px;top:19px;" width="14" height="12" viewBox="0 0 14 12"><path d="M0 3 H3.5 L4.8 0.8 H9.2 L10.5 3 H14 V12 H0 Z" fill="#e6e6e6"/><circle cx="7" cy="7.3" r="3.3" fill="#282828"/><circle cx="7" cy="7.3" r="2.3" fill="#e6e6e6"/><circle cx="7" cy="7.3" r="1.3" fill="#282828"/></svg>
<svg class="r" style="left:1156px;top:19px;" width="14" height="12" viewBox="0 0 14 12"><path d="M0.8 6 Q7 -1.5 13.2 6 Q7 13.5 0.8 6 Z" fill="none" stroke="#e6e6e6" stroke-width="1.6"/><circle cx="7" cy="6" r="2.6" fill="#e6e6e6"/><circle cx="7" cy="6" r="1" fill="#282828"/></svg>
<svg class="r" style="left:848px;top:40px;" width="7" height="10" viewBox="0 0 7 10"><path d="M1 1 L5 5 L1 9" fill="none" stroke="#7a7a7a" stroke-width="1.1"/></svg>
<svg class="r" style="left:864px;top:38px;" width="14" height="13" viewBox="0 0 14 13"><rect x="0" y="0" width="14" height="3" fill="#8a8a8a"/><rect x="1" y="4.5" width="12" height="8.5" fill="#8a8a8a"/><rect x="5" y="6" width="4" height="1.6" fill="#282828"/></svg>
<div class="t" style="left:885px;top:40.6px;font-size:11.52px;color:#8c8c8c;letter-spacing:0.24px;">Prop</div>
<svg class="r" style="left:1138px;top:40px;" width="11" height="11" viewBox="0 0 11 11"><rect x="0" y="0" width="11" height="11" rx="1.5" fill="#e6e6e6"/><path d="M2.3 5.6 L4.6 8 L8.8 3" fill="none" stroke="#1a1a1a" stroke-width="1.8"/></svg>
<svg class="r" style="left:1177px;top:39px;" width="14" height="12" viewBox="0 0 14 12"><path d="M0 3 H3.5 L4.8 0.8 H9.2 L10.5 3 H14 V12 H0 Z" fill="#e6e6e6"/><circle cx="7" cy="7.3" r="3.3" fill="#282828"/><circle cx="7" cy="7.3" r="2.3" fill="#e6e6e6"/><circle cx="7" cy="7.3" r="1.3" fill="#282828"/></svg>
<svg class="r" style="left:1157px;top:42px;" width="14" height="8" viewBox="0 0 14 8"><path d="M1 2 Q7 8 13 2" fill="none" stroke="#505050" stroke-width="1.1"/></svg>
<svg class="r" style="left:848px;top:60px;" width="7" height="10" viewBox="0 0 7 10"><path d="M1 1 L5 5 L1 9" fill="none" stroke="#7a7a7a" stroke-width="1.1"/></svg>
<svg class="r" style="left:864px;top:58px;" width="14" height="13" viewBox="0 0 14 13"><rect x="0" y="0" width="14" height="3" fill="#8a8a8a"/><rect x="1" y="4.5" width="12" height="8.5" fill="#8a8a8a"/><rect x="5" y="6" width="4" height="1.6" fill="#282828"/></svg>
<div class="t" style="left:885px;top:60.6px;font-size:11.52px;color:#8c8c8c;letter-spacing:0.24px;">Animation_Area_Reference</div>
<svg class="r" style="left:1138px;top:60px;" width="11" height="11" viewBox="0 0 11 11"><rect x="0" y="0" width="11" height="11" rx="1.5" fill="#e6e6e6"/><path d="M2.3 5.6 L4.6 8 L8.8 3" fill="none" stroke="#1a1a1a" stroke-width="1.8"/></svg>
<svg class="r" style="left:1177px;top:59px;" width="14" height="12" viewBox="0 0 14 12"><path d="M0 3 H3.5 L4.8 0.8 H9.2 L10.5 3 H14 V12 H0 Z" fill="#e6e6e6"/><circle cx="7" cy="7.3" r="3.3" fill="#282828"/><circle cx="7" cy="7.3" r="2.3" fill="#e6e6e6"/><circle cx="7" cy="7.3" r="1.3" fill="#282828"/></svg>
<svg class="r" style="left:1157px;top:62px;" width="14" height="8" viewBox="0 0 14 8"><path d="M1 2 Q7 8 13 2" fill="none" stroke="#505050" stroke-width="1.1"/></svg>
<svg class="r" style="left:942px;top:18px;" width="14" height="14" viewBox="0 0 14 14"><path d="M1.2 1.5 L12.8 1.5 L7 12.5 Z" fill="none" stroke="#e0883a" stroke-width="2.6" stroke-linejoin="round"/></svg>
<div class="t" style="left:950px;top:25.8px;font-size:10px;color:#e6e6e6;letter-spacing:0px;text-shadow:0 0 1px #000,0 0 1px #000;">32</div>
<div class="r" style="left:959px;top:16px;width:20px;height:18px;background:#545454;border-radius:4px;border:1px solid #666;box-sizing:border-box;"></div>
<svg class="r" style="left:962px;top:18px;" width="14" height="14" viewBox="0 0 14 14"><circle cx="7.5" cy="2" r="1.7" fill="#e8913f"/><path d="M1.5 5.2 Q7 4 12.8 6 M7.2 4.5 L6.8 8.5 L4 13 M6.8 8.5 L10.5 13" fill="none" stroke="#e8913f" stroke-width="2.5" stroke-linecap="round" stroke-linejoin="round"/></svg>
<svg class="r" style="left:982px;top:19px;" width="14" height="13" viewBox="0 0 14 13"><rect x="0" y="0" width="14" height="3" fill="#e0e0e0"/><rect x="1" y="4.5" width="12" height="8.5" fill="#e0e0e0"/><rect x="5" y="6" width="4" height="1.6" fill="#282828"/></svg>
<div class="t" style="left:996px;top:25.3px;font-size:10px;color:#e6e6e6;text-shadow:0 0 1px #000,0 0 1px #000;">2</div>
<svg class="r" style="left:933px;top:38px;" width="14" height="14" viewBox="0 0 14 14"><circle cx="7.5" cy="2" r="1.7" fill="#8a5a34"/><path d="M1.5 5.2 Q7 4 12.8 6 M7.2 4.5 L6.8 8.5 L4 13 M6.8 8.5 L10.5 13" fill="none" stroke="#8a5a34" stroke-width="2.5" stroke-linecap="round" stroke-linejoin="round"/></svg>
<svg class="r" style="left:1049px;top:58px;" width="14" height="14" viewBox="0 0 14 14"><path d="M1.2 1.5 L12.8 1.5 L7 12.5 Z" fill="none" stroke="#8a5a34" stroke-width="2.6" stroke-linejoin="round"/></svg>
<div class="t" style="left:1063px;top:64.8px;font-size:10px;color:#e6e6e6;text-shadow:0 0 1px #000,0 0 1px #000;">2</div>
<div class="r" style="left:821px;top:140px;width:378px;height:681px;background:#2e2e2e;border-radius:6px;border-radius:6px 6px 0 0;"></div>
<div class="r" style="left:829px;top:142px;width:32px;height:20px;background:#282828;border-radius:5px;border:1px solid #3d3d3d;box-sizing:border-box;"></div>
<svg class="r" style="left:833px;top:145px;" width="17" height="15" viewBox="0 0 17 15"><rect x="0.5" y="0.5" width="13" height="6" rx="3" fill="#d8d8d8"/><circle cx="10.5" cy="3.5" r="2.2" fill="#282828"/><rect x="0.5" y="8" width="13" height="6" rx="3" fill="#d8d8d8"/><circle cx="3.5" cy="11" r="2.2" fill="#282828"/></svg>
<svg class="r" style="left:851px;top:150px;" width="8" height="6" viewBox="0 0 8 6"><path d="M0.8 1 L4.0 5 L7.2 1" fill="none" stroke="#d0d0d0" stroke-width="1.1"/></svg>
<div class="r" style="left:954px;top:142.5px;width:118px;height:19.5px;background:#1f1f1f;border-radius:5px;border:1px solid #3a3a3a;box-sizing:border-box;"></div>
<svg class="r" style="left:957px;top:145px;" width="16" height="16" viewBox="0 0 16 16"><circle cx="9.5" cy="5.8" r="4.3" fill="none" stroke="#c8c8c8" stroke-width="1.3"/><path d="M6.6 9 L1.5 14.2" stroke="#c8c8c8" stroke-width="1.5"/></svg>
<div class="t" style="left:979px;top:146.6px;font-size:11.52px;color:#6f6f6f;letter-spacing:0.24px;">Search</div>
<div class="r" style="left:1176px;top:142px;width:19px;height:20px;background:#262626;border-radius:5px;border:1px solid #3d3d3d;box-sizing:border-box;"></div>
<svg class="r" style="left:1181px;top:150px;" width="9" height="6" viewBox="0 0 9 6"><path d="M0.8 1 L4.5 5 L8.2 1" fill="none" stroke="#d0d0d0" stroke-width="1.1"/></svg>
<div class="r" style="left:822px;top:164px;width:27px;height:657px;background:#1d1d1d;border-radius:0px;"></div>
<div class="r" style="left:822px;top:200px;width:27px;height:1px;background:#262626;border-radius:0px;"></div>
<div class="r" style="left:822px;top:349px;width:27px;height:1px;background:#262626;border-radius:0px;"></div>
<div class="r" style="left:822px;top:525px;width:27px;height:1px;background:#262626;border-radius:0px;"></div>
<svg class="r" style="left:828px;top:179px;" width="16" height="16" viewBox="0 0 16 16"><path d="M4 1 V8" stroke="#d0d0d0" stroke-width="1.4"/><ellipse cx="4" cy="11.5" rx="2.4" ry="3" fill="#d0d0d0"/><path d="M9.5 1.5 V4 Q11.5 6 13.5 4 V1.5" fill="none" stroke="#d0d0d0" stroke-width="1.6"/><path d="M11.5 5 V14.5" stroke="#d0d0d0" stroke-width="2"/></svg>
<svg class="r" style="left:828px;top:214px;" width="16" height="16" viewBox="0 0 16 16"><rect x="1.5" y="4" width="13" height="10" fill="none" stroke="#c8c8c8" stroke-width="1.5"/><rect x="4" y="1.5" width="5" height="2.5" fill="#c8c8c8"/><path d="M3.5 7.5 H9.5 M3.5 10 H9.5 M3.5 12 H9.5" stroke="#c8c8c8" stroke-width="1"/><rect x="11" y="6.5" width="2" height="2" fill="#c8c8c8"/><rect x="11" y="10" width="2" height="2" fill="#c8c8c8"/></svg>
<svg class="r" style="left:828px;top:242px;" width="16" height="16" viewBox="0 0 16 16"><rect x="1" y="1" width="14" height="5" fill="#c8c8c8"/><rect x="3.5" y="6" width="9" height="9" fill="none" stroke="#c8c8c8" stroke-width="1.4"/><path d="M5 13.5 L8 9.5 L11 13.5 Z" fill="#c8c8c8"/></svg>
<svg class="r" style="left:828px;top:271px;" width="16" height="16" viewBox="0 0 16 16"><rect x="5" y="1" width="10" height="10" fill="none" stroke="#c8c8c8" stroke-width="1.3"/><path d="M3 4 V13 H12" fill="none" stroke="#c8c8c8" stroke-width="1.1"/><path d="M1 6 V15 H10" fill="none" stroke="#c8c8c8" stroke-width="1.1"/><path d="M6.5 9.5 L9.5 5 L13 9.5 Z" fill="#c8c8c8"/><circle cx="12" cy="3.8" r="1" fill="#c8c8c8"/></svg>
<svg class="r" style="left:828px;top:298px;" width="16" height="16" viewBox="0 0 16 16"><path d="M5 2 L8.5 9 A3.5 3.5 0 0 1 1.5 9 Z" fill="#c8c8c8"/><circle cx="13" cy="3" r="2" fill="#c8c8c8"/><circle cx="10.5" cy="11.5" r="3.6" fill="none" stroke="#c8c8c8" stroke-width="1.3"/></svg>
<svg class="r" style="left:828px;top:326px;" width="16" height="16" viewBox="0 0 16 16"><circle cx="8" cy="8.5" r="6" fill="none" stroke="#c05a5a" stroke-width="1.5"/><path d="M3.5 6.5 Q6 5 7.5 7 Q9 9 7 10.5 Q6 12 7.5 14 M9.5 3.5 Q11 6 13.5 6.5" fill="none" stroke="#c05a5a" stroke-width="1.7"/><path d="M1.5 14.5 Q8 10 14.5 1.5" fill="none" stroke="#c05a5a" stroke-width="1.1"/></svg>
<svg class="r" style="left:828px;top:362px;" width="16" height="16" viewBox="0 0 16 16"><rect x="4" y="4" width="8" height="8" fill="#e09050"/><path d="M1 4 V1 H4 M12 1 H15 V4 M15 12 V15 H12 M4 15 H1 V12" fill="none" stroke="#e09050" stroke-width="1.1"/></svg>
<svg class="r" style="left:828px;top:390px;" width="16" height="16" viewBox="0 0 16 16"><circle cx="7" cy="9" r="5.6" fill="none" stroke="#6a8fd8" stroke-width="1.4" stroke-dasharray="26 9"/><circle cx="7" cy="9" r="3" fill="#6a8fd8"/><circle cx="13" cy="3" r="1.9" fill="#6a8fd8"/></svg>
<svg class="r" style="left:828px;top:418px;" width="16" height="16" viewBox="0 0 16 16"><path d="M2.5 12 Q0 7 6 3 Q13 -1 14 4 Q15 8 9 13 Q4 16 2.5 12 Z" fill="none" stroke="#6a8fd8" stroke-width="1.6"/><circle cx="7" cy="9.5" r="2.5" fill="none" stroke="#6a8fd8" stroke-width="1.6"/></svg>
<div class="r" style="left:823px;top:442px;width:26px;height:26px;background:#303030;border-radius:4px;border-radius:4px 0 0 4px;"></div>
<svg class="r" style="left:828px;top:447px;" width="16" height="16" viewBox="0 0 16 16"><circle cx="9" cy="2" r="1.5" fill="#2ec7a0"/><path d="M1 4.5 L7 4.5 L12 8 L15 6.5 M7 4.5 L7.5 9 L3 15 M7.5 9 L12 11 L13.5 15" fill="none" stroke="#2ec7a0" stroke-width="1.4" stroke-linejoin="round"/></svg>
<svg class="r" style="left:828px;top:475px;" width="16" height="16" viewBox="0 0 16 16"><path d="M3.5 12.5 L12.5 3.5" stroke="#2ec7a0" stroke-width="3"/><circle cx="2.8" cy="10.5" r="2.2" fill="#2ec7a0"/><circle cx="5.5" cy="13.2" r="2.2" fill="#2ec7a0"/><circle cx="10.5" cy="2.8" r="2.2" fill="#2ec7a0"/><circle cx="13.2" cy="5.5" r="2.2" fill="#2ec7a0"/></svg>
<svg class="r" style="left:828px;top:502px;" width="16" height="16" viewBox="0 0 16 16"><path d="M4 8 Q5 3 9 4 Q14 5 13 10 Q12 14 7 13 Z" fill="none" stroke="#6a8fd8" stroke-width="1.5"/><path d="M6 10 L11 15" stroke="#6a8fd8" stroke-width="2.2"/><path d="M1 3 H5 M3 1 V5" stroke="#6a8fd8" stroke-width="1.3"/><circle cx="9" cy="8.5" r="1.6" fill="#6a8fd8"/></svg>
<div class="r" style="left:849px;top:164px;width:350px;height:657px;background:#2e2e2e;border-radius:0px;"></div>
<div class="r" style="left:857px;top:164px;width:337px;height:56px;background:#3d3d3d;border-radius:5px;border-radius:0 0 5px 5px;"></div>
<svg class="r" style="left:866px;top:169.5px;" width="9" height="6" viewBox="0 0 9 6"><path d="M0.8 1 L4.5 5 L8.2 1" fill="none" stroke="#c0c0c0" stroke-width="1.1"/></svg>
<div class="t" style="left:879px;top:166.6px;font-size:11.52px;color:#e5e5e5;letter-spacing:0.24px;">Pose</div>
<svg class="r" style="left:1177px;top:167.5px;" width="12" height="8.8" viewBox="0 0 12 8.8"><rect x="0.6" y="0.6" width="1.4" height="1.4" fill="#5a5a5a"/><rect x="0" y="0.0" width="1.4" height="1.4" fill="#141414"/><rect x="0.6" y="3.2" width="1.4" height="1.4" fill="#5a5a5a"/><rect x="0" y="2.6" width="1.4" height="1.4" fill="#141414"/><rect x="0.6" y="5.8" width="1.4" height="1.4" fill="#5a5a5a"/><rect x="0" y="5.2" width="1.4" height="1.4" fill="#141414"/><rect x="3.6" y="0.6" width="1.4" height="1.4" fill="#5a5a5a"/><rect x="3" y="0.0" width="1.4" height="1.4" fill="#141414"/><rect x="3.6" y="3.2" width="1.4" height="1.4" fill="#5a5a5a"/><rect x="3" y="2.6" width="1.4" height="1.4" fill="#141414"/><rect x="3.6" y="5.8" width="1.4" height="1.4" fill="#5a5a5a"/><rect x="3" y="5.2" width="1.4" height="1.4" fill="#141414"/><rect x="6.6" y="0.6" width="1.4" height="1.4" fill="#5a5a5a"/><rect x="6" y="0.0" width="1.4" height="1.4" fill="#141414"/><rect x="6.6" y="3.2" width="1.4" height="1.4" fill="#5a5a5a"/><rect x="6" y="2.6" width="1.4" height="1.4" fill="#141414"/><rect x="6.6" y="5.8" width="1.4" height="1.4" fill="#5a5a5a"/><rect x="6" y="5.2" width="1.4" height="1.4" fill="#141414"/><rect x="9.6" y="0.6" width="1.4" height="1.4" fill="#5a5a5a"/><rect x="9" y="0.0" width="1.4" height="1.4" fill="#141414"/><rect x="9.6" y="3.2" width="1.4" height="1.4" fill="#5a5a5a"/><rect x="9" y="2.6" width="1.4" height="1.4" fill="#141414"/><rect x="9.6" y="5.8" width="1.4" height="1.4" fill="#5a5a5a"/><rect x="9" y="5.2" width="1.4" height="1.4" fill="#141414"/></svg>
<div class="r" style="left:866px;top:193px;width:158px;height:18px;background:#4772b3;border-radius:4px;border-radius:4px 0 0 4px;box-shadow:0 1px 0 #2f2f2f;"></div>
<div class="r" style="left:1025px;top:193px;width:160px;height:18px;background:#545454;border-radius:4px;border-radius:0 4px 4px 0;box-shadow:0 1px 0 #2f2f2f;"></div>
<div class="t" style="left:866px;width:158px;text-align:center;top:196.6px;font-size:11.52px;color:#ffffff;letter-spacing:0.24px;">Pose Position</div>
<div class="t" style="left:1025px;width:160px;text-align:center;top:196.6px;font-size:11.52px;color:#e5e5e5;letter-spacing:0.24px;">Rest Position</div>
<div class="r" style="left:857px;top:222px;width:337px;height:375px;background:#3d3d3d;border-radius:5px;"></div>
<svg class="r" style="left:866px;top:232.5px;" width="9" height="6" viewBox="0 0 9 6"><path d="M0.8 1 L4.5 5 L8.2 1" fill="none" stroke="#c0c0c0" stroke-width="1.1"/></svg>
<div class="t" style="left:879px;top:229.6px;font-size:11.52px;color:#e5e5e5;letter-spacing:0.24px;">Bone Collections</div>
<svg class="r" style="left:1177px;top:231px;" width="12" height="8.8" viewBox="0 0 12 8.8"><rect x="0.6" y="0.6" width="1.4" height="1.4" fill="#5a5a5a"/><rect x="0" y="0.0" width="1.4" height="1.4" fill="#141414"/><rect x="0.6" y="3.2" width="1.4" height="1.4" fill="#5a5a5a"/><rect x="0" y="2.6" width="1.4" height="1.4" fill="#141414"/><rect x="0.6" y="5.8" width="1.4" height="1.4" fill="#5a5a5a"/><rect x="0" y="5.2" width="1.4" height="1.4" fill="#141414"/><rect x="3.6" y="0.6" width="1.4" height="1.4" fill="#5a5a5a"/><rect x="3" y="0.0" width="1.4" height="1.4" fill="#141414"/><rect x="3.6" y="3.2" width="1.4" height="1.4" fill="#5a5a5a"/><rect x="3" y="2.6" width="1.4" height="1.4" fill="#141414"/><rect x="3.6" y="5.8" width="1.4" height="1.4" fill="#5a5a5a"/><rect x="3" y="5.2" width="1.4" height="1.4" fill="#141414"/><rect x="6.6" y="0.6" width="1.4" height="1.4" fill="#5a5a5a"/><rect x="6" y="0.0" width="1.4" height="1.4" fill="#141414"/><rect x="6.6" y="3.2" width="1.4" height="1.4" fill="#5a5a5a"/><rect x="6" y="2.6" width="1.4" height="1.4" fill="#141414"/><rect x="6.6" y="5.8" width="1.4" height="1.4" fill="#5a5a5a"/><rect x="6" y="5.2" width="1.4" height="1.4" fill="#141414"/><rect x="9.6" y="0.6" width="1.4" height="1.4" fill="#5a5a5a"/><rect x="9" y="0.0" width="1.4" height="1.4" fill="#141414"/><rect x="9.6" y="3.2" width="1.4" height="1.4" fill="#5a5a5a"/><rect x="9" y="2.6" width="1.4" height="1.4" fill="#141414"/><rect x="9.6" y="5.8" width="1.4" height="1.4" fill="#5a5a5a"/><rect x="9" y="5.2" width="1.4" height="1.4" fill="#141414"/></svg>
<div class="r" style="left:866px;top:256px;width:291px;height:282px;background:#282828;border-radius:5px;box-shadow:0 1px 0 #353535;"></div>
<div class="t" style="left:890px;top:265.6px;font-size:11.52px;color:#e5e5e5;letter-spacing:0.24px;">Global/Switch</div>
<svg class="r" style="left:1103px;top:269px;" width="14" height="7" viewBox="0 0 14 7"><path d="M1 1.2 Q7 8.8 13 1.2" fill="none" stroke="#8c8c8c" stroke-width="1.1"/></svg>
<svg class="r" style="left:1123px;top:264px;" width="13" height="13" viewBox="0 0 13 13"><polygon points="6.50,0.90 8.12,4.58 12.11,4.98 9.12,7.65 9.97,11.57 6.50,9.55 3.03,11.57 3.88,7.65 0.89,4.98 4.88,4.58" fill="none" stroke="#e6e6e6" stroke-width="1.1" stroke-linejoin="round"/></svg>
<svg class="r" style="left:1085.5px;top:267.3px;" width="8" height="8" viewBox="0 0 8 8"><circle cx="4" cy="4" r="2.8" fill="#e0e0e0"/></svg>
<div class="r" style="left:871px;top:284px;width:273px;height:18px;background:#4772b3;border-radius:4px;"></div>
<div class="t" style="left:890px;top:287.6px;font-size:11.52px;color:#ffffff;letter-spacing:0.24px;">FK Upper</div>
<svg class="r" style="left:1103px;top:291px;" width="14" height="7" viewBox="0 0 14 7"><path d="M1 1.2 Q7 8.8 13 1.2" fill="none" stroke="#a8a8a8" stroke-width="1.1"/></svg>
<svg class="r" style="left:1123px;top:286px;" width="13" height="13" viewBox="0 0 13 13"><polygon points="6.50,0.90 8.12,4.58 12.11,4.98 9.12,7.65 9.97,11.57 6.50,9.55 3.03,11.57 3.88,7.65 0.89,4.98 4.88,4.58" fill="none" stroke="#e6e6e6" stroke-width="1.1" stroke-linejoin="round"/></svg>
<div class="t" style="left:890px;top:309.6px;font-size:11.52px;color:#e5e5e5;letter-spacing:0.24px;">FK Lower</div>
<svg class="r" style="left:1103px;top:313px;" width="14" height="7" viewBox="0 0 14 7"><path d="M1 1.2 Q7 8.8 13 1.2" fill="none" stroke="#8c8c8c" stroke-width="1.1"/></svg>
<svg class="r" style="left:1123px;top:308px;" width="13" height="13" viewBox="0 0 13 13"><polygon points="6.50,0.90 8.12,4.58 12.11,4.98 9.12,7.65 9.97,11.57 6.50,9.55 3.03,11.57 3.88,7.65 0.89,4.98 4.88,4.58" fill="none" stroke="#e6e6e6" stroke-width="1.1" stroke-linejoin="round"/></svg>
<div class="t" style="left:890px;top:331.6px;font-size:11.52px;color:#e5e5e5;letter-spacing:0.24px;">IK Upper</div>
<svg class="r" style="left:1103px;top:335px;" width="14" height="7" viewBox="0 0 14 7"><path d="M1 1.2 Q7 8.8 13 1.2" fill="none" stroke="#8c8c8c" stroke-width="1.1"/></svg>
<svg class="r" style="left:1123px;top:330px;" width="13" height="13" viewBox="0 0 13 13"><polygon points="6.50,0.90 8.12,4.58 12.11,4.98 9.12,7.65 9.97,11.57 6.50,9.55 3.03,11.57 3.88,7.65 0.89,4.98 4.88,4.58" fill="none" stroke="#e6e6e6" stroke-width="1.1" stroke-linejoin="round"/></svg>
<div class="t" style="left:890px;top:353.6px;font-size:11.52px;color:#e5e5e5;letter-spacing:0.24px;">IK Lower</div>
<svg class="r" style="left:1103px;top:357px;" width="14" height="7" viewBox="0 0 14 7"><path d="M1 1.2 Q7 8.8 13 1.2" fill="none" stroke="#8c8c8c" stroke-width="1.1"/></svg>
<svg class="r" style="left:1123px;top:352px;" width="13" height="13" viewBox="0 0 13 13"><polygon points="6.50,0.90 8.12,4.58 12.11,4.98 9.12,7.65 9.97,11.57 6.50,9.55 3.03,11.57 3.88,7.65 0.89,4.98 4.88,4.58" fill="none" stroke="#e6e6e6" stroke-width="1.1" stroke-linejoin="round"/></svg>
<div class="t" style="left:890px;top:375.6px;font-size:11.52px;color:#e5e5e5;letter-spacing:0.24px;">Fingers</div>
<svg class="r" style="left:1103px;top:379px;" width="14" height="7" viewBox="0 0 14 7"><path d="M1 1.2 Q7 8.8 13 1.2" fill="none" stroke="#8c8c8c" stroke-width="1.1"/></svg>
<svg class="r" style="left:1123px;top:374px;" width="13" height="13" viewBox="0 0 13 13"><polygon points="6.50,0.90 8.12,4.58 12.11,4.98 9.12,7.65 9.97,11.57 6.50,9.55 3.03,11.57 3.88,7.65 0.89,4.98 4.88,4.58" fill="none" stroke="#e6e6e6" stroke-width="1.1" stroke-linejoin="round"/></svg>
<div class="t" style="left:890px;top:397.6px;font-size:11.52px;color:#e5e5e5;letter-spacing:0.24px;">Deformation Bones</div>
<svg class="r" style="left:1103px;top:397.5px;" width="14" height="11" viewBox="0 0 14 11"><path d="M0.8 5.5 Q7 -1.5 13.2 5.5 Q7 12.5 0.8 5.5 Z" fill="none" stroke="#e6e6e6" stroke-width="1.5"/><circle cx="7" cy="5.5" r="2.5" fill="#e6e6e6"/><circle cx="7" cy="5.5" r="0.9" fill="#282828"/></svg>
<svg class="r" style="left:1123px;top:396px;" width="13" height="13" viewBox="0 0 13 13"><polygon points="6.50,0.90 8.12,4.58 12.11,4.98 9.12,7.65 9.97,11.57 6.50,9.55 3.03,11.57 3.88,7.65 0.89,4.98 4.88,4.58" fill="none" stroke="#e6e6e6" stroke-width="1.1" stroke-linejoin="round"/></svg>
<div class="t" style="left:890px;top:419.6px;font-size:11.52px;color:#e5e5e5;letter-spacing:0.24px;">DON'T TOUCH (head rotation)</div>
<svg class="r" style="left:1103px;top:423px;" width="14" height="7" viewBox="0 0 14 7"><path d="M1 1.2 Q7 8.8 13 1.2" fill="none" stroke="#8c8c8c" stroke-width="1.1"/></svg>
<svg class="r" style="left:1123px;top:418px;" width="13" height="13" viewBox="0 0 13 13"><polygon points="6.50,0.90 8.12,4.58 12.11,4.98 9.12,7.65 9.97,11.57 6.50,9.55 3.03,11.57 3.88,7.65 0.89,4.98 4.88,4.58" fill="none" stroke="#e6e6e6" stroke-width="1.1" stroke-linejoin="round"/></svg>
<div class="t" style="left:890px;top:441.6px;font-size:11.52px;color:#e5e5e5;letter-spacing:0.24px;">DON'T TOUCH (shoulder rotation)</div>
<svg class="r" style="left:1103px;top:445px;" width="14" height="7" viewBox="0 0 14 7"><path d="M1 1.2 Q7 8.8 13 1.2" fill="none" stroke="#8c8c8c" stroke-width="1.1"/></svg>
<svg class="r" style="left:1123px;top:440px;" width="13" height="13" viewBox="0 0 13 13"><polygon points="6.50,0.90 8.12,4.58 12.11,4.98 9.12,7.65 9.97,11.57 6.50,9.55 3.03,11.57 3.88,7.65 0.89,4.98 4.88,4.58" fill="none" stroke="#e6e6e6" stroke-width="1.1" stroke-linejoin="round"/></svg>
<div class="t" style="left:890px;top:463.6px;font-size:11.52px;color:#e5e5e5;letter-spacing:0.24px;">DON'T TOUCH (IK Setup)</div>
<svg class="r" style="left:1103px;top:467px;" width="14" height="7" viewBox="0 0 14 7"><path d="M1 1.2 Q7 8.8 13 1.2" fill="none" stroke="#8c8c8c" stroke-width="1.1"/></svg>
<svg class="r" style="left:1123px;top:462px;" width="13" height="13" viewBox="0 0 13 13"><polygon points="6.50,0.90 8.12,4.58 12.11,4.98 9.12,7.65 9.97,11.57 6.50,9.55 3.03,11.57 3.88,7.65 0.89,4.98 4.88,4.58" fill="none" stroke="#e6e6e6" stroke-width="1.1" stroke-linejoin="round"/></svg>
<svg class="r" style="left:1006px;top:527px;" width="12" height="6.2" viewBox="0 0 12 6.2"><rect x="0.6" y="0.6" width="1.4" height="1.4" fill="#282828"/><rect x="0" y="0.0" width="1.4" height="1.4" fill="#c8c8c8"/><rect x="0.6" y="3.2" width="1.4" height="1.4" fill="#282828"/><rect x="0" y="2.6" width="1.4" height="1.4" fill="#c8c8c8"/><rect x="3.6" y="0.6" width="1.4" height="1.4" fill="#282828"/><rect x="3" y="0.0" width="1.4" height="1.4" fill="#c8c8c8"/><rect x="3.6" y="3.2" width="1.4" height="1.4" fill="#282828"/><rect x="3" y="2.6" width="1.4" height="1.4" fill="#c8c8c8"/><rect x="6.6" y="0.6" width="1.4" height="1.4" fill="#282828"/><rect x="6" y="0.0" width="1.4" height="1.4" fill="#c8c8c8"/><rect x="6.6" y="3.2" width="1.4" height="1.4" fill="#282828"/><rect x="6" y="2.6" width="1.4" height="1.4" fill="#c8c8c8"/><rect x="9.6" y="0.6" width="1.4" height="1.4" fill="#282828"/><rect x="9" y="0.0" width="1.4" height="1.4" fill="#c8c8c8"/><rect x="9.6" y="3.2" width="1.4" height="1.4" fill="#282828"/><rect x="9" y="2.6" width="1.4" height="1.4" fill="#c8c8c8"/></svg>
<div class="r" style="left:1167px;top:256px;width:18px;height:18px;background:#545454;border-radius:4px;border-radius:4px 4px 0 0;"></div>
<div class="r" style="left:1167px;top:275px;width:18px;height:19px;background:#545454;border-radius:4px;border-radius:0 0 4px 4px;box-shadow:0 1px 0 #2f2f2f;"></div>
<svg class="r" style="left:1170px;top:259px;" width="12" height="12" viewBox="0 0 12 12"><path d="M6 1 V11 M1 6 H11" stroke="#e0e0e0" stroke-width="1.2"/></svg>
<svg class="r" style="left:1170px;top:278px;" width="12" height="12" viewBox="0 0 12 12"><path d="M1 6 H11" stroke="#e0e0e0" stroke-width="1.2"/></svg>
<div class="r" style="left:1167px;top:302px;width:18px;height:18px;background:#282828;border-radius:4px;box-shadow:0 1px 0 #2f2f2f;"></div>
<svg class="r" style="left:1171px;top:308px;" width="10" height="6" viewBox="0 0 10 6"><path d="M0.8 1 L5.0 5 L9.2 1" fill="none" stroke="#e0e0e0" stroke-width="1.1"/></svg>
<div class="r" style="left:1167px;top:328px;width:18px;height:18px;background:#545454;border-radius:4px;border-radius:4px 4px 0 0;"></div>
<div class="r" style="left:1167px;top:347px;width:18px;height:18px;background:#545454;border-radius:4px;border-radius:0 0 4px 4px;"></div>
<svg class="r" style="left:1170px;top:331px;" width="12" height="12" viewBox="0 0 12 12"><path d="M1.5 9 L6 3.5 L10.5 9 Z" fill="#e0e0e0"/></svg>
<svg class="r" style="left:1170px;top:350px;" width="12" height="12" viewBox="0 0 12 12"><path d="M1.5 3 L6 8.5 L10.5 3 Z" fill="#e0e0e0"/></svg>
<div class="r" style="left:866px;top:545px;width:76px;height:18px;background:#545454;border-radius:4px;border-radius:4px 0 0 4px;box-shadow:0 1px 0 #2f2f2f;"></div>
<div class="r" style="left:943px;top:545px;width:77px;height:18px;background:#545454;border-radius:4px;border-radius:0 4px 4px 0;box-shadow:0 1px 0 #2f2f2f;"></div>
<div class="r" style="left:1030px;top:545px;width:76px;height:18px;background:#545454;border-radius:4px;border-radius:4px 0 0 4px;box-shadow:0 1px 0 #2f2f2f;"></div>
<div class="r" style="left:1107px;top:545px;width:78px;height:18px;background:#545454;border-radius:4px;border-radius:0 4px 4px 0;box-shadow:0 1px 0 #2f2f2f;"></div>
<div class="t" style="left:866px;width:76px;text-align:center;top:548.6px;font-size:11.52px;color:#e5e5e5;letter-spacing:0.24px;">Assign</div>
<div class="t" style="left:943px;width:77px;text-align:center;top:548.6px;font-size:11.52px;color:#e5e5e5;letter-spacing:0.24px;">Remove</div>
<div class="t" style="left:1030px;width:76px;text-align:center;top:548.6px;font-size:11.52px;color:#e5e5e5;letter-spacing:0.24px;">Select</div>
<div class="t" style="left:1107px;width:78px;text-align:center;top:548.6px;font-size:11.52px;color:#e5e5e5;letter-spacing:0.24px;">Deselect</div>
<svg class="r" style="left:881px;top:579px;" width="7" height="10" viewBox="0 0 7 10"><path d="M1 1 L5 5 L1 9" fill="none" stroke="#c0c0c0" stroke-width="1.1"/></svg>
<div class="t" style="left:893px;top:579.6px;font-size:11.52px;color:#e5e5e5;letter-spacing:0.24px;">Custom Properties</div>
<div class="r" style="left:857px;top:600px;width:337px;height:24px;background:#3d3d3d;border-radius:5px;"></div>
<svg class="r" style="left:868px;top:606px;" width="7" height="10" viewBox="0 0 7 10"><path d="M1 1 L5 5 L1 9" fill="none" stroke="#c0c0c0" stroke-width="1.1"/></svg>
<div class="t" style="left:879px;top:606.6px;font-size:11.52px;color:#e5e5e5;letter-spacing:0.24px;">Motion Paths</div>
<svg class="r" style="left:1177px;top:606.5px;" width="12" height="8.8" viewBox="0 0 12 8.8"><rect x="0.6" y="0.6" width="1.4" height="1.4" fill="#5a5a5a"/><rect x="0" y="0.0" width="1.4" height="1.4" fill="#141414"/><rect x="0.6" y="3.2" width="1.4" height="1.4" fill="#5a5a5a"/><rect x="0" y="2.6" width="1.4" height="1.4" fill="#141414"/><rect x="0.6" y="5.8" width="1.4" height="1.4" fill="#5a5a5a"/><rect x="0" y="5.2" width="1.4" height="1.4" fill="#141414"/><rect x="3.6" y="0.6" width="1.4" height="1.4" fill="#5a5a5a"/><rect x="3" y="0.0" width="1.4" height="1.4" fill="#141414"/><rect x="3.6" y="3.2" width="1.4" height="1.4" fill="#5a5a5a"/><rect x="3" y="2.6" width="1.4" height="1.4" fill="#141414"/><rect x="3.6" y="5.8" width="1.4" height="1.4" fill="#5a5a5a"/><rect x="3" y="5.2" width="1.4" height="1.4" fill="#141414"/><rect x="6.6" y="0.6" width="1.4" height="1.4" fill="#5a5a5a"/><rect x="6" y="0.0" width="1.4" height="1.4" fill="#141414"/><rect x="6.6" y="3.2" width="1.4" height="1.4" fill="#5a5a5a"/><rect x="6" y="2.6" width="1.4" height="1.4" fill="#141414"/><rect x="6.6" y="5.8" width="1.4" height="1.4" fill="#5a5a5a"/><rect x="6" y="5.2" width="1.4" height="1.4" fill="#141414"/><rect x="9.6" y="0.6" width="1.4" height="1.4" fill="#5a5a5a"/><rect x="9" y="0.0" width="1.4" height="1.4" fill="#141414"/><rect x="9.6" y="3.2" width="1.4" height="1.4" fill="#5a5a5a"/><rect x="9" y="2.6" width="1.4" height="1.4" fill="#141414"/><rect x="9.6" y="5.8" width="1.4" height="1.4" fill="#5a5a5a"/><rect x="9" y="5.2" width="1.4" height="1.4" fill="#141414"/></svg>
<div class="r" style="left:857px;top:626px;width:337px;height:204px;background:#3d3d3d;border-radius:5px;"></div>
<svg class="r" style="left:866px;top:635.5px;" width="9" height="6" viewBox="0 0 9 6"><path d="M0.8 1 L4.5 5 L8.2 1" fill="none" stroke="#c0c0c0" stroke-width="1.1"/></svg>
<div class="t" style="left:879px;top:633.6px;font-size:11.52px;color:#e5e5e5;letter-spacing:0.24px;">Viewport Display</div>
<svg class="r" style="left:1177px;top:634.5px;" width="12" height="8.8" viewBox="0 0 12 8.8"><rect x="0.6" y="0.6" width="1.4" height="1.4" fill="#5a5a5a"/><rect x="0" y="0.0" width="1.4" height="1.4" fill="#141414"/><rect x="0.6" y="3.2" width="1.4" height="1.4" fill="#5a5a5a"/><rect x="0" y="2.6" width="1.4" height="1.4" fill="#141414"/><rect x="0.6" y="5.8" width="1.4" height="1.4" fill="#5a5a5a"/><rect x="0" y="5.2" width="1.4" height="1.4" fill="#141414"/><rect x="3.6" y="0.6" width="1.4" height="1.4" fill="#5a5a5a"/><rect x="3" y="0.0" width="1.4" height="1.4" fill="#141414"/><rect x="3.6" y="3.2" width="1.4" height="1.4" fill="#5a5a5a"/><rect x="3" y="2.6" width="1.4" height="1.4" fill="#141414"/><rect x="3.6" y="5.8" width="1.4" height="1.4" fill="#5a5a5a"/><rect x="3" y="5.2" width="1.4" height="1.4" fill="#141414"/><rect x="6.6" y="0.6" width="1.4" height="1.4" fill="#5a5a5a"/><rect x="6" y="0.0" width="1.4" height="1.4" fill="#141414"/><rect x="6.6" y="3.2" width="1.4" height="1.4" fill="#5a5a5a"/><rect x="6" y="2.6" width="1.4" height="1.4" fill="#141414"/><rect x="6.6" y="5.8" width="1.4" height="1.4" fill="#5a5a5a"/><rect x="6" y="5.2" width="1.4" height="1.4" fill="#141414"/><rect x="9.6" y="0.6" width="1.4" height="1.4" fill="#5a5a5a"/><rect x="9" y="0.0" width="1.4" height="1.4" fill="#141414"/><rect x="9.6" y="3.2" width="1.4" height="1.4" fill="#5a5a5a"/><rect x="9" y="2.6" width="1.4" height="1.4" fill="#141414"/><rect x="9.6" y="5.8" width="1.4" height="1.4" fill="#5a5a5a"/><rect x="9" y="5.2" width="1.4" height="1.4" fill="#141414"/></svg>
<div class="t" style="right:218px;top:663.6px;font-size:11.52px;color:#e5e5e5;letter-spacing:0.24px;">Display As</div>
<div class="r" style="left:991px;top:660px;width:174px;height:18px;background:#282828;border-radius:4px;box-shadow:0 1px 0 #353535;"></div>
<div class="t" style="left:998px;top:663.6px;font-size:11.52px;color:#e5e5e5;letter-spacing:0.24px;">Octahedral</div>
<svg class="r" style="left:1151px;top:666px;" width="9" height="6" viewBox="0 0 9 6"><path d="M0.8 1 L4.5 5 L8.2 1" fill="none" stroke="#d0d0d0" stroke-width="1.1"/></svg>
<svg class="r" style="left:1172px;top:665px;" width="8" height="8" viewBox="0 0 8 8"><circle cx="4" cy="4" r="2.2" fill="#d0d0d0"/></svg>
<div class="t" style="right:218px;top:689.1px;font-size:11.52px;color:#e5e5e5;letter-spacing:0.24px;">Show</div>
<svg class="r" style="left:991px;top:688px;" width="12" height="13" viewBox="0 0 12 13"><rect x="0" y="0" width="12" height="12" rx="2.5" fill="#545454"/><rect x="0.5" y="12" width="11" height="1" fill="#262626" opacity="0.5"/></svg>
<div class="t" style="left:1007px;top:689.1px;font-size:11.52px;color:#e5e5e5;letter-spacing:0.24px;">Names</div>
<svg class="r" style="left:1172px;top:690px;" width="8" height="8" viewBox="0 0 8 8"><circle cx="4" cy="4" r="2.2" fill="#d0d0d0"/></svg>
<svg class="r" style="left:991px;top:710px;" width="12" height="13" viewBox="0 0 12 13"><rect x="0" y="0" width="12" height="12" rx="2.5" fill="#4772b3"/><path d="M2.6 6.2 L5 8.6 L9.6 3.2" fill="none" stroke="#ffffff" stroke-width="1.7"/><rect x="0.5" y="12" width="11" height="1" fill="#262626" opacity="0.5"/></svg>
<div class="t" style="left:1007px;top:711.1px;font-size:11.52px;color:#e5e5e5;letter-spacing:0.24px;">Shapes</div>
<svg class="r" style="left:1172px;top:712px;" width="8" height="8" viewBox="0 0 8 8"><circle cx="4" cy="4" r="2.2" fill="#d0d0d0"/></svg>
<svg class="r" style="left:991px;top:732px;" width="12" height="13" viewBox="0 0 12 13"><rect x="0" y="0" width="12" height="12" rx="2.5" fill="#4772b3"/><path d="M2.6 6.2 L5 8.6 L9.6 3.2" fill="none" stroke="#ffffff" stroke-width="1.7"/><rect x="0.5" y="12" width="11" height="1" fill="#262626" opacity="0.5"/></svg>
<div class="t" style="left:1007px;top:733.1px;font-size:11.52px;color:#e5e5e5;letter-spacing:0.24px;">Bone Colors</div>
<svg class="r" style="left:1172px;top:734px;" width="8" height="8" viewBox="0 0 8 8"><circle cx="4" cy="4" r="2.2" fill="#d0d0d0"/></svg>
<svg class="r" style="left:991px;top:754px;" width="12" height="13" viewBox="0 0 12 13"><rect x="0" y="0" width="12" height="12" rx="2.5" fill="#4772b3"/><path d="M2.6 6.2 L5 8.6 L9.6 3.2" fill="none" stroke="#ffffff" stroke-width="1.7"/><rect x="0.5" y="12" width="11" height="1" fill="#262626" opacity="0.5"/></svg>
<div class="t" style="left:1007px;top:755.1px;font-size:11.52px;color:#e5e5e5;letter-spacing:0.24px;">In Front</div>
<svg class="r" style="left:1172px;top:756px;" width="8" height="8" viewBox="0 0 8 8"><circle cx="4" cy="4" r="2.2" fill="#d0d0d0"/></svg>
<div class="t" style="right:218px;top:780.1px;font-size:11.52px;color:#e5e5e5;letter-spacing:0.24px;">Axes</div>
<svg class="r" style="left:991px;top:779px;" width="12" height="13" viewBox="0 0 12 13"><rect x="0" y="0" width="12" height="12" rx="2.5" fill="#4772b3"/><path d="M2.6 6.2 L5 8.6 L9.6 3.2" fill="none" stroke="#ffffff" stroke-width="1.7"/><rect x="0.5" y="12" width="11" height="1" fill="#262626" opacity="0.5"/></svg>
<div class="r" style="left:1011px;top:776px;width:154px;height:18px;background:#545454;border-radius:4px;box-shadow:0 1px 0 #2f2f2f;"></div>
<div class="t" style="left:1027px;top:780.1px;font-size:11.52px;color:#e5e5e5;letter-spacing:0.24px;">Position</div>
<div class="t" style="right:47px;top:780.1px;font-size:11.52px;color:#e5e5e5;letter-spacing:0.24px;">0.0</div>
<svg class="r" style="left:1172px;top:781px;" width="8" height="8" viewBox="0 0 8 8"><circle cx="4" cy="4" r="2.2" fill="#d0d0d0"/></svg>
<div class="t" style="right:218px;top:802.1px;font-size:11.52px;color:#e5e5e5;letter-spacing:0.24px;">Relations</div>
<div class="r" style="left:991px;top:798px;width:86px;height:18px;background:#4772b3;border-radius:4px;border-radius:4px 0 0 4px;"></div>
<div class="r" style="left:1078px;top:798px;width:87px;height:18px;background:#545454;border-radius:4px;border-radius:0 4px 4px 0;"></div>
<div class="t" style="left:991px;width:86px;text-align:center;top:802.1px;font-size:11.52px;color:#ffffff;letter-spacing:0.24px;">Tail</div>
<div class="t" style="left:1078px;width:87px;text-align:center;top:802.1px;font-size:11.52px;color:#e5e5e5;letter-spacing:0.24px;">Head</div>
<svg class="r" style="left:1172px;top:803px;" width="8" height="8" viewBox="0 0 8 8"><circle cx="4" cy="4" r="2.2" fill="#d0d0d0"/></svg>
<div class="r" style="left:1195px;top:238px;width:3px;height:583px;background:#3a3a3a;border-radius:2px;"></div>
</body></html>
